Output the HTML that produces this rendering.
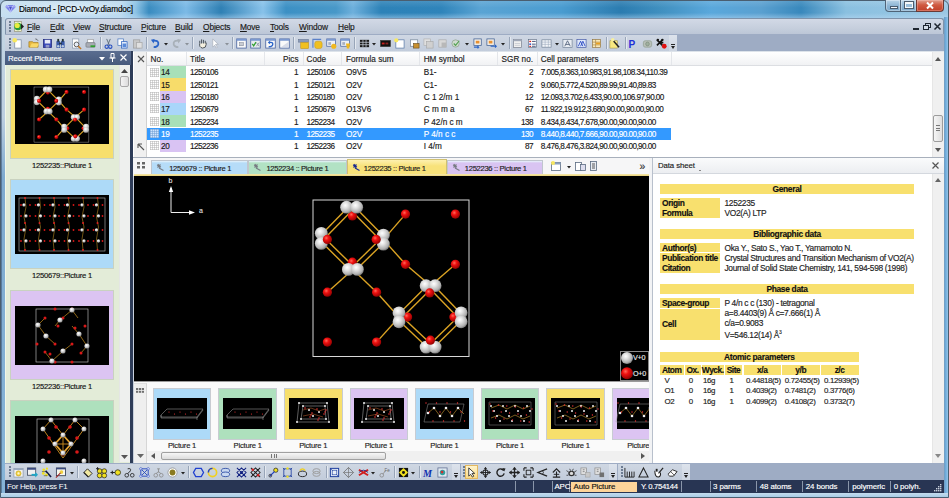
<!DOCTYPE html>
<html><head><meta charset="utf-8">
<style>
*{margin:0;padding:0;box-sizing:border-box}
html,body{width:949px;height:498px;overflow:hidden;background:#a9c4dc;font-family:"Liberation Sans",sans-serif;font-size:8px;color:#000}
.a{position:absolute}
.t{position:absolute;white-space:nowrap;line-height:1;-webkit-text-stroke:0.15px currentColor}
svg{position:absolute;overflow:visible}
</style></head><body>

<div class="a" style="left:0px;top:0px;width:949px;height:498px;background:linear-gradient(90deg,#c8e0f0 0px,#bcdaee 120px,#8cc2e4 135px,#3a8cc0 148px,#7cbae6 185px,#2f80b4 220px,#88c2ea 262px,#3c90c4 285px,#4898c8 335px,#6eb0dc 352px,#2d82b8 380px,#2f84ba 440px,#5aa4d4 480px,#4a9cd0 560px,#2b7cb0 620px,#4090c0 660px,#5aa8dc 710px,#5aa0d0 760px,#3888bc 800px,#8ac0e0 845px,#9cc8e4 949px);border-radius:6px 6px 0 0;border:1px solid #4a5e70"></div>
<div class="a" style="left:1px;top:1px;width:947px;height:17px;background:linear-gradient(rgba(255,255,255,.12),rgba(255,255,255,0) 40%,rgba(255,255,255,0) 70%,rgba(190,220,245,.45));border-radius:5px 5px 0 0"></div>
<div class="a" style="left:10px;top:1px;width:125px;height:16px;background:radial-gradient(ellipse at center,rgba(235,245,252,.7),rgba(235,245,252,0) 75%)"></div>
<div class="a" style="left:1px;top:493px;width:947px;height:4px;background:linear-gradient(#c4dcee,#a8cce6)"></div>
<div class="a" style="left:1px;top:17px;width:4px;height:476px;background:linear-gradient(#c4d6e4 0px,#bccfe0 100px,#7eaad0 160px,#86b4d8 476px)"></div>
<div class="a" style="left:1px;top:17px;width:1px;height:476px;background:rgba(40,60,90,.45)"></div>
<div class="a" style="left:944px;top:17px;width:4px;height:476px;background:linear-gradient(90deg,#7a9ab8,#6aa8d8 30%,#94c4e8)"></div>
<svg style="left:5px;top:5px" width="11" height="8" viewBox="0 0 11 8"><path d="M0 1.8L2 0H9L11 1.8L5.5 7.5Z" fill="#7a82ea"/><path d="M0 1.8H11M2 0L4 1.8L5.5 7.5M9 0L7 1.8L5.5 7.5" stroke="#c8d0fa" stroke-width="0.7" fill="none"/><path d="M4 1.8L5.5 5L7 1.8Z" fill="#4a50c8"/></svg>
<div class="t" style="left:19px;top:5.6px;font-size:8.2px;color:#000;letter-spacing:-0.12px">Diamond - [PCD-VxOy.diamdoc]</div>
<div class="a" style="left:885px;top:0px;width:16px;height:12px;background:linear-gradient(#b8d4e8,#8fb6d4 50%,#7aa8cc);border:1px solid #4f6478;border-top:none;border-radius:0 0 0 4px;box-shadow:inset 0 0 0 1px rgba(255,255,255,.35)"></div>
<div class="a" style="left:889.5px;top:6px;width:8px;height:3px;background:#f4f8fb;border:1px solid #4a5c6e"></div>
<div class="a" style="left:900px;top:0px;width:17px;height:12px;background:linear-gradient(#b8d4e8,#8fb6d4 50%,#7aa8cc);border:1px solid #4f6478;border-top:none;box-shadow:inset 0 0 0 1px rgba(255,255,255,.35)"></div>
<div class="a" style="left:904.5px;top:2px;width:8px;height:6px;background:#9cc0dc;border:1px solid #f4f8fb;outline:1px solid #4a5c6e;border-top-width:2px"></div>
<div class="a" style="left:916px;top:0px;width:28px;height:12px;background:linear-gradient(#e0a090,#d05a42 45%,#c0402a);border:1px solid #6a3a35;border-top:none;border-radius:0 0 4px 0;box-shadow:inset 0 0 0 1px rgba(255,200,190,.35)"></div>
<svg style="left:926px;top:2px" width="8" height="7" viewBox="0 0 8 7"><path d="M1 0.5L7 6.5M7 0.5L1 6.5" stroke="#fff" stroke-width="2"/></svg>
<div class="a" style="left:5px;top:18px;width:939px;height:16px;background:linear-gradient(#d2d9e6,#c6cfdd 60%,#bcc6d7);border:1px solid #7f93ab;border-bottom:none;border-radius:3px 3px 0 0"></div>
<div class="a" style="left:9px;top:21px;width:2px;height:2px;background:#6d7c92"></div>
<div class="a" style="left:9px;top:24px;width:2px;height:2px;background:#6d7c92"></div>
<div class="a" style="left:9px;top:27px;width:2px;height:2px;background:#6d7c92"></div>
<div class="a" style="left:9px;top:30px;width:2px;height:2px;background:#6d7c92"></div>
<svg style="left:12.5px;top:20.5px" width="11" height="11" viewBox="0 0 11 11"><rect x="1.5" y="0.5" width="7" height="10" fill="#f0f0d0" stroke="#8a8a6a" stroke-width="0.6"/><circle cx="5" cy="5.5" r="3.8" fill="#2a9a3a"/><circle cx="4.2" cy="4.5" r="2.6" fill="#e8ec40"/><path d="M8 2.5L11 5.5L8 8.5Z" fill="#222"/></svg>
<div class="t" style="left:27px;top:22.5px;font-size:8.4px;color:#1a1a1a;letter-spacing:-0.15px"><u>F</u>ile</div>
<div class="t" style="left:50px;top:22.5px;font-size:8.4px;color:#1a1a1a;letter-spacing:-0.15px"><u>E</u>dit</div>
<div class="t" style="left:73px;top:22.5px;font-size:8.4px;color:#1a1a1a;letter-spacing:-0.15px"><u>V</u>iew</div>
<div class="t" style="left:99px;top:22.5px;font-size:8.4px;color:#1a1a1a;letter-spacing:-0.15px"><u>S</u>tructure</div>
<div class="t" style="left:141px;top:22.5px;font-size:8.4px;color:#1a1a1a;letter-spacing:-0.15px"><u>P</u>icture</div>
<div class="t" style="left:175px;top:22.5px;font-size:8.4px;color:#1a1a1a;letter-spacing:-0.15px"><u>B</u>uild</div>
<div class="t" style="left:203px;top:22.5px;font-size:8.4px;color:#1a1a1a;letter-spacing:-0.15px"><u>O</u>bjects</div>
<div class="t" style="left:240px;top:22.5px;font-size:8.4px;color:#1a1a1a;letter-spacing:-0.15px"><u>M</u>ove</div>
<div class="t" style="left:270px;top:22.5px;font-size:8.4px;color:#1a1a1a;letter-spacing:-0.15px"><u>T</u>ools</div>
<div class="t" style="left:299px;top:22.5px;font-size:8.4px;color:#1a1a1a;letter-spacing:-0.15px"><u>W</u>indow</div>
<div class="t" style="left:338px;top:22.5px;font-size:8.4px;color:#1a1a1a;letter-spacing:-0.15px"><u>H</u>elp</div>
<div class="a" style="left:912.5px;top:28px;width:6px;height:2px;background:#1f2630"></div>
<svg style="left:922.5px;top:23px" width="8" height="7" viewBox="0 0 8 7"><rect x="2.5" y="0.5" width="5" height="4" fill="none" stroke="#1f2630" stroke-width="1"/><rect x="0.5" y="2.5" width="5" height="4" fill="#d5dde8" stroke="#1f2630" stroke-width="1"/></svg>
<svg style="left:933.5px;top:23px" width="7" height="7" viewBox="0 0 7 7"><path d="M0.5 0.5L6.5 6.5M6.5 0.5L0.5 6.5" stroke="#1f2630" stroke-width="1.5"/></svg>
<div class="a" style="left:5px;top:34px;width:939px;height:17px;background:#9eacc4"></div>
<div class="a" style="left:5px;top:35px;width:672px;height:16px;background:linear-gradient(#cfd7e3,#c2ccdb);border-radius:0 2px 2px 0"></div>
<div class="a" style="left:669px;top:35px;width:8px;height:16px;background:linear-gradient(#dde3ec,#cdd5e1)"></div>
<svg style="left:670px;top:44px" width="6" height="6" viewBox="0 0 6 6"><rect x="1" y="0" width="4" height="1" fill="#222"/><path d="M1 2L5 2L3 5Z" fill="#222"/></svg>
<div class="a" style="left:9px;top:38px;width:2px;height:2px;background:#6d7c92"></div>
<div class="a" style="left:9px;top:41px;width:2px;height:2px;background:#6d7c92"></div>
<div class="a" style="left:9px;top:44px;width:2px;height:2px;background:#6d7c92"></div>
<div class="a" style="left:9px;top:47px;width:2px;height:2px;background:#6d7c92"></div>
<svg style="left:12.2px;top:37.5px" width="11" height="11" viewBox="0 0 12 12"><rect x="3" y="2" width="7" height="9" fill="#fff" stroke="#7a8aa0" stroke-width="0.8"/><circle cx="3" cy="2.5" r="2.5" fill="#f8e860"/></svg>
<svg style="left:27.5px;top:37.5px" width="11" height="11" viewBox="0 0 12 12"><path d="M1 4L5 4L6 5L11 5L11 10L1 10Z" fill="#e8b840" stroke="#a07818" stroke-width="0.7"/><path d="M2 10L4 6L12 6L10 10Z" fill="#f8d868"/><path d="M8 1 Q10 1 11 3" stroke="#444" stroke-width="0.8" fill="none"/></svg>
<svg style="left:41.8px;top:37.5px" width="11" height="11" viewBox="0 0 12 12"><rect x="1.5" y="1.5" width="9" height="9" fill="#3848b8" stroke="#20287a" stroke-width="0.8"/><rect x="3" y="2" width="6" height="4" fill="#e8ecf8"/><rect x="4" y="7.5" width="4" height="3" fill="#9098c8"/></svg>
<svg style="left:55.3px;top:37.5px" width="11" height="11" viewBox="0 0 12 12"><rect x="1.5" y="3" width="4" height="8" rx="1" fill="#3a5aa8"/><rect x="6.5" y="3" width="4" height="8" rx="1" fill="#3a5aa8"/><rect x="2.5" y="1" width="2" height="3" fill="#233"/><rect x="7.5" y="1" width="2" height="3" fill="#233"/><rect x="4.5" y="5" width="3" height="2" fill="#234"/><circle cx="3.5" cy="9" r="1.3" fill="#bcd"/><circle cx="8.5" cy="9" r="1.3" fill="#bcd"/></svg>
<svg style="left:70.5px;top:37.5px" width="11" height="11" viewBox="0 0 12 12"><rect x="1.5" y="1" width="7" height="10" fill="#fff" stroke="#8a9ab0" stroke-width="0.8"/><circle cx="6" cy="7" r="2.6" fill="#e8eef8" stroke="#555" stroke-width="1"/><path d="M8 9L11 12" stroke="#c87820" stroke-width="1.6"/></svg>
<svg style="left:84.5px;top:37.5px" width="11" height="11" viewBox="0 0 12 12"><rect x="3" y="1.5" width="6" height="4" fill="#fff" stroke="#888" stroke-width="0.6"/><rect x="1" y="5" width="10" height="5" rx="1" fill="#a8acb4" stroke="#6a6e78" stroke-width="0.6"/><rect x="6" y="8" width="5" height="2" fill="#30a030"/></svg>
<div class="a" style="left:100.0px;top:37px;width:1px;height:12px;background:#98a5b8;box-shadow:1px 0 0 #e4e9f0"></div>
<svg style="left:102.5px;top:37.5px" width="11" height="11" viewBox="0 0 12 12"><path d="M4 1L7 8M8 1L5 8" stroke="#5a6a7a" stroke-width="1"/><circle cx="4" cy="9.5" r="1.8" fill="none" stroke="#2850c0" stroke-width="1.2"/><circle cx="8" cy="9.5" r="1.8" fill="none" stroke="#2850c0" stroke-width="1.2"/></svg>
<svg style="left:117.3px;top:37.5px" width="11" height="11" viewBox="0 0 12 12"><rect x="1" y="1" width="6" height="7" fill="#fff" stroke="#4a78c0" stroke-width="0.8"/><rect x="5" y="4" width="6" height="7" fill="#e8f0fc" stroke="#2860c0" stroke-width="0.8"/><rect x="6" y="6" width="4" height="4" fill="#5a8ad8"/></svg>
<svg style="left:132.0px;top:37.5px" width="11" height="11" viewBox="0 0 12 12"><rect x="1.5" y="2" width="7" height="9" fill="#c8c8c8" stroke="#a0a0a0" stroke-width="0.8"/><rect x="5" y="5" width="6" height="6" fill="#e0e0e0" stroke="#a8a8a8" stroke-width="0.8"/></svg>
<div class="a" style="left:146.0px;top:37px;width:1px;height:12px;background:#98a5b8;box-shadow:1px 0 0 #e4e9f0"></div>
<svg style="left:150.2px;top:37.5px" width="11" height="11" viewBox="0 0 12 12"><path d="M3 3 Q10 2 9 7 Q8 10 4 10" stroke="#2a64c8" stroke-width="2" fill="none"/><path d="M1 2L5 1L4 6Z" fill="#2a64c8"/></svg>
<svg style="left:163.8px;top:43.0px" width="4" height="3" viewBox="0 0 4 3"><path d="M0 0H4L2 2.5Z" fill="#222"/></svg>
<svg style="left:170.5px;top:37.5px" width="11" height="11" viewBox="0 0 12 12"><path d="M9 3 Q2 2 3 7 Q4 10 8 10" stroke="#a8b0b8" stroke-width="2" fill="none"/><path d="M11 2L7 1L8 6Z" fill="#a8b0b8"/></svg>
<svg style="left:184.8px;top:43.0px" width="4" height="3" viewBox="0 0 4 3"><path d="M0 0H4L2 2.5Z" fill="#8a9098"/></svg>
<div class="a" style="left:192.0px;top:37px;width:1px;height:12px;background:#98a5b8;box-shadow:1px 0 0 #e4e9f0"></div>
<svg style="left:197.0px;top:37.5px" width="11" height="11" viewBox="0 0 12 12"><path d="M3 6 L3 3 M5 6L5 1.5 M7 6L7 2 M9 6L9 3 M3 6 Q2 10 6 11 Q10 11 10 7 L10 5" stroke="#404850" stroke-width="1" fill="#f4f0e0"/></svg>
<svg style="left:209.5px;top:37.5px" width="11" height="11" viewBox="0 0 12 12"><path d="M3 1L3 10L5 8L7 11L8 10L6 7L9 7Z" fill="#fff" stroke="#a8b0bc" stroke-width="0.8"/></svg>
<svg style="left:224.6px;top:43.0px" width="4" height="3" viewBox="0 0 4 3"><path d="M0 0H4L2 2.5Z" fill="#8a9098"/></svg>
<div class="a" style="left:231.6px;top:37px;width:1px;height:12px;background:#98a5b8;box-shadow:1px 0 0 #e4e9f0"></div>
<svg style="left:235.9px;top:37.5px" width="11" height="11" viewBox="0 0 12 12"><rect x="0.8" y="1" width="10.4" height="10" fill="#fafafa" stroke="#4a64a0" stroke-width="0.9"/><rect x="0.8" y="1" width="10.4" height="2" fill="#7a98d0"/><rect x="4" y="5" width="4" height="3.5" fill="#c8ccd4" stroke="#707888" stroke-width="0.5"/></svg>
<svg style="left:249.8px;top:37.5px" width="11" height="11" viewBox="0 0 12 12"><rect x="0.8" y="1" width="10.4" height="10" fill="#e8ecf0" stroke="#4a64a0" stroke-width="0.9"/><rect x="0.8" y="1" width="10.4" height="2" fill="#7a98d0"/><path d="M2.5 6.5L4 8.5L6.5 4.5" stroke="#30a030" stroke-width="1.4" fill="none"/><path d="M7 5L10 9M10 5L7 9" stroke="#8a90a0" stroke-width="0.9"/></svg>
<svg style="left:265.0px;top:37.5px" width="11" height="11" viewBox="0 0 12 12"><rect x="0.8" y="1" width="10.4" height="10" fill="#fafafa" stroke="#4a64a0" stroke-width="0.9"/><rect x="0.8" y="1" width="10.4" height="2" fill="#7a98d0"/><path d="M4 9.5Q8.5 9.5 8.5 6.5Q8.5 4.5 5 4.8" stroke="#2a64c8" stroke-width="1.5" fill="none"/><path d="M3 4.8L5.5 3V6.8Z" fill="#2a64c8"/></svg>
<svg style="left:278.9px;top:37.5px" width="11" height="11" viewBox="0 0 12 12"><rect x="0.8" y="1" width="10.4" height="10" fill="#fafafa" stroke="#4a64a0" stroke-width="0.9"/><rect x="0.8" y="1" width="10.4" height="2" fill="#7a98d0"/><path d="M2 10L10.5 4V10Z" fill="#d8dce8"/></svg>
<div class="a" style="left:293.0px;top:37px;width:1px;height:12px;background:#98a5b8;box-shadow:1px 0 0 #e4e9f0"></div>
<svg style="left:297.9px;top:37.5px" width="11" height="11" viewBox="0 0 12 12"><rect x="0.5" y="1.5" width="11" height="3" fill="#8a9ab8" stroke="#5a6a88" stroke-width="0.5"/><rect x="3" y="5" width="8.5" height="6.5" fill="#f0c020" stroke="#c09010" stroke-width="0.6"/></svg>
<svg style="left:311.8px;top:37.5px" width="11" height="11" viewBox="0 0 12 12"><path d="M1 10.5V1.5H10" stroke="#5a80c8" stroke-width="1.2" fill="none"/><rect x="3" y="3.5" width="8" height="8" rx="2.5" fill="#f0c020" stroke="#c89818" stroke-width="0.6"/></svg>
<svg style="left:325.8px;top:37.5px" width="11" height="11" viewBox="0 0 12 12"><rect x="0.8" y="1" width="9.5" height="8" fill="#eef0f4" stroke="#4a64a0" stroke-width="0.8"/><rect x="0.8" y="1" width="9.5" height="2" fill="#7a98d0"/><rect x="2.5" y="4.5" width="3" height="3" fill="#a8b0c0"/><circle cx="8.5" cy="9" r="2.8" fill="#f0b820"/></svg>
<svg style="left:339.7px;top:37.5px" width="11" height="11" viewBox="0 0 12 12"><rect x="0.8" y="1" width="9.5" height="8" fill="#eef0f4" stroke="#4a64a0" stroke-width="0.8"/><rect x="0.8" y="1" width="9.5" height="2" fill="#7a98d0"/><rect x="2.5" y="4.5" width="3" height="3" fill="#a8b0c0"/><path d="M6.5 6H11L10 11.5H7.5Z" fill="#f0b820"/></svg>
<div class="a" style="left:354.0px;top:37px;width:1px;height:12px;background:#98a5b8;box-shadow:1px 0 0 #e4e9f0"></div>
<svg style="left:358.7px;top:37.5px" width="11" height="11" viewBox="0 0 12 12"><rect x="1" y="2" width="10" height="8" fill="#1a1a1a"/><path d="M1 4.7H11M1 7.3H11M4.3 2V10M7.7 2V10" stroke="#c8d0dc" stroke-width="0.8"/></svg>
<svg style="left:372.3px;top:43.0px" width="4" height="3" viewBox="0 0 4 3"><path d="M0 0H4L2 2.5Z" fill="#222"/></svg>
<svg style="left:380.2px;top:37.5px" width="11" height="11" viewBox="0 0 12 12"><rect x="0.5" y="2.5" width="11" height="7" fill="#101010" stroke="#404040" stroke-width="0.6"/><rect x="2" y="5" width="3" height="2" fill="#c82020"/><rect x="6" y="5" width="3" height="2" fill="#882020"/></svg>
<svg style="left:394.1px;top:37.5px" width="11" height="11" viewBox="0 0 12 12"><rect x="2" y="2" width="9" height="9" fill="#fff" stroke="#5a7aa8" stroke-width="0.8"/><circle cx="2.5" cy="2.5" r="2.3" fill="#f8e860"/></svg>
<svg style="left:409.3px;top:37.5px" width="11" height="11" viewBox="0 0 12 12"><rect x="1.5" y="2" width="8" height="7" fill="#fff" stroke="#6a7a90" stroke-width="0.7"/><rect x="5" y="6" width="6" height="5" fill="#c89030" stroke="#604010" stroke-width="0.6"/></svg>
<svg style="left:423.2px;top:37.5px" width="11" height="11" viewBox="0 0 12 12"><rect x="1" y="1" width="7" height="7" fill="#e0e0e0" stroke="#b0b0b0" stroke-width="0.7"/><rect x="4" y="4" width="7" height="7" fill="#d0d0d0" stroke="#a8a8a8" stroke-width="0.7"/></svg>
<svg style="left:437.2px;top:37.5px" width="11" height="11" viewBox="0 0 12 12"><rect x="2" y="2" width="8" height="8" fill="#d8d8d8" stroke="#a8a8a8" stroke-width="0.7"/><rect x="5" y="5" width="5" height="5" fill="#b8b8b8"/></svg>
<svg style="left:451.1px;top:37.5px" width="11" height="11" viewBox="0 0 12 12"><circle cx="5" cy="6" r="4" fill="#d0dcd0" stroke="#90a090" stroke-width="0.8"/><path d="M3 6L5 8L9 3" stroke="#50a050" stroke-width="1.2" fill="none"/></svg>
<svg style="left:464.7px;top:43.0px" width="4" height="3" viewBox="0 0 4 3"><path d="M0 0H4L2 2.5Z" fill="#222"/></svg>
<svg style="left:472.7px;top:37.5px" width="11" height="11" viewBox="0 0 12 12"><rect x="1" y="1" width="8" height="7" fill="#f4f0e8" stroke="#3a5a90" stroke-width="0.8"/><rect x="3" y="3" width="4" height="3" fill="#e89030"/><path d="M1 10L6 10L5 8.5M6 10L5 11.5" stroke="#2a64c8" stroke-width="1.2" fill="none"/></svg>
<svg style="left:486.1px;top:37.5px" width="11" height="11" viewBox="0 0 12 12"><rect x="1" y="1" width="8" height="7" fill="#f4f0e8" stroke="#3a5a90" stroke-width="0.8"/><rect x="3" y="3" width="4" height="3" fill="#e89030"/><path d="M5 9L11 9L10 7.5M11 9L10 10.5" stroke="#2a64c8" stroke-width="1.2" fill="none"/></svg>
<svg style="left:501.0px;top:43.0px" width="4" height="3" viewBox="0 0 4 3"><path d="M0 0H4L2 2.5Z" fill="#222"/></svg>
<div class="a" style="left:509.0px;top:37px;width:1px;height:12px;background:#98a5b8;box-shadow:1px 0 0 #e4e9f0"></div>
<svg style="left:512.2px;top:37.5px" width="11" height="11" viewBox="0 0 12 12"><rect x="1.5" y="1.5" width="9" height="9" fill="#f0f0f0" stroke="#7a8090" stroke-width="0.8"/><rect x="1.5" y="1.5" width="9" height="2" fill="#a0a8b8"/><path d="M3 6H9M3 8H9" stroke="#c0c4cc" stroke-width="0.8"/></svg>
<svg style="left:526.5px;top:37.5px" width="11" height="11" viewBox="0 0 12 12"><rect x="1.5" y="1.5" width="9" height="9" fill="#fff" stroke="#5a6a80" stroke-width="0.7"/><rect x="2.5" y="3" width="2" height="1.5" fill="#d02020"/><rect x="2.5" y="6" width="2" height="1.5" fill="#2040c0"/><rect x="2.5" y="8.5" width="2" height="1.2" fill="#d02020"/><path d="M5.5 3.7H9.5M5.5 6.7H9.5M5.5 9H9.5" stroke="#203060" stroke-width="0.9"/></svg>
<svg style="left:540.5px;top:37.5px" width="11" height="11" viewBox="0 0 12 12"><rect x="1" y="2" width="10" height="8" fill="#f4f6fa" stroke="#6a7a90" stroke-width="0.7"/><path d="M1 4.5H11M1 7H11M4.5 2V10M8 2V10" stroke="#9aa8bc" stroke-width="0.6"/></svg>
<svg style="left:554.7px;top:43.0px" width="4" height="3" viewBox="0 0 4 3"><path d="M0 0H4L2 2.5Z" fill="#222"/></svg>
<svg style="left:562.1px;top:37.5px" width="11" height="11" viewBox="0 0 12 12"><rect x="1" y="1.5" width="10" height="9" fill="#e8ecf2" stroke="#6a7a90" stroke-width="0.7"/><path d="M3 9L6 3L9 9M4 7H8" stroke="#50607a" stroke-width="0.9" fill="none"/></svg>
<svg style="left:576.0px;top:37.5px" width="11" height="11" viewBox="0 0 12 12"><rect x="1" y="1.5" width="10" height="9" fill="#dfe8fa" stroke="#3a50a0" stroke-width="0.7"/><path d="M2.5 9L5 3.5L7.5 9M5 9L7.5 3.5L10 9" stroke="#2040c0" stroke-width="0.9" fill="none"/></svg>
<svg style="left:591.2px;top:37.5px" width="11" height="11" viewBox="0 0 12 12"><rect x="1.5" y="1.5" width="9" height="9" fill="#f8e8b8" stroke="#8a7040" stroke-width="0.7"/><path d="M1.5 4.5H10.5M1.5 7.5H10.5M5 1.5V10.5" stroke="#a88040" stroke-width="0.7"/><rect x="5.5" y="5" width="4.5" height="2" fill="#e8a020"/></svg>
<div class="a" style="left:606.0px;top:37px;width:1px;height:12px;background:#98a5b8;box-shadow:1px 0 0 #e4e9f0"></div>
<svg style="left:608.9px;top:37.5px" width="11" height="11" viewBox="0 0 12 12"><rect x="1" y="3" width="8" height="8" fill="#f8e880" stroke="#a09040" stroke-width="0.6"/><path d="M3 1L11 10" stroke="#222" stroke-width="1.6"/><circle cx="4" cy="2" r="2" fill="#f8f0a0"/></svg>
<div class="a" style="left:624.6px;top:37px;width:1px;height:12px;background:#98a5b8;box-shadow:1px 0 0 #e4e9f0"></div>
<svg style="left:626.7px;top:37.5px" width="11" height="11" viewBox="0 0 12 12"><text x="1.5" y="10.5" font-family="Liberation Sans" font-weight="bold" font-size="11" fill="#2030d8">P</text></svg>
<svg style="left:641.8px;top:37.5px" width="11" height="11" viewBox="0 0 12 12"><rect x="1.5" y="3" width="9" height="7" rx="2" fill="#b8c0b8" stroke="#8a9a8a" stroke-width="0.7"/><circle cx="6" cy="6.5" r="2" fill="#a0b0a0" stroke="#708070" stroke-width="0.6"/></svg>
<svg style="left:655.8px;top:37.5px" width="11" height="11" viewBox="0 0 12 12"><path d="M1 2L7 8M7 2L1 8M2 5H8" stroke="#111" stroke-width="1.8"/><circle cx="2" cy="2" r="1.3" fill="#111"/><circle cx="7" cy="2" r="1.3" fill="#111"/><circle cx="9" cy="9" r="2.6" fill="#e01010"/></svg>
<div class="a" style="left:5px;top:51px;width:939px;height:412px;background:#c8d0dc"></div>
<div class="a" style="left:5px;top:51px;width:128px;height:412px;background:#2e3c58"></div>
<div class="a" style="left:5px;top:51px;width:126px;height:14px;background:linear-gradient(#5a6d90,#475a7c)"></div>
<div class="t" style="left:8px;top:55px;font-size:7.8px;color:#fff;letter-spacing:-0.1px">Recent Pictures</div>
<svg style="left:99px;top:57px" width="6" height="4" viewBox="0 0 6 4"><path d="M0 0H6L3 3.5Z" fill="#fff"/></svg>
<svg style="left:109px;top:53px" width="7" height="9" viewBox="0 0 7 9"><path d="M2 0.5H5V5H2ZM0.5 5H6.5M3.5 5V9" stroke="#fff" stroke-width="1" fill="none"/></svg>
<svg style="left:120px;top:54px" width="7" height="7" viewBox="0 0 7 7"><path d="M0.5 0.5L6.5 6.5M6.5 0.5L0.5 6.5" stroke="#fff" stroke-width="1.2"/></svg>
<div class="a" style="left:5px;top:65px;width:125px;height:398px;background:#e3ecd8;border-left:1px solid #f0f6ea"></div>
<div class="a" style="left:119px;top:65px;width:11px;height:397px;background:#eef0ee;border-left:1px solid #e4e6e4"></div>
<svg style="left:121px;top:69px" width="7" height="4" viewBox="0 0 7 4"><path d="M0 4H7L3.5 0Z" fill="#444"/></svg>
<div class="a" style="left:120px;top:76px;width:9px;height:11px;background:linear-gradient(90deg,#f4f4f4,#dcdcdc);border:1px solid #a8a8a8;border-radius:2px"></div>
<svg style="left:121px;top:455px" width="7" height="4" viewBox="0 0 7 4"><path d="M0 0H7L3.5 4Z" fill="#555"/></svg>
<svg width="0" height="0" style="position:absolute"><defs>
<radialGradient id="gO" cx="0.38" cy="0.35" r="0.7"><stop offset="0" stop-color="#ff6a5a"/><stop offset="0.35" stop-color="#f01010"/><stop offset="1" stop-color="#8a0000"/></radialGradient>
<radialGradient id="gV" cx="0.4" cy="0.35" r="0.7"><stop offset="0" stop-color="#ffffff"/><stop offset="0.3" stop-color="#e4e4e4"/><stop offset="0.75" stop-color="#b0b0b0"/><stop offset="1" stop-color="#6a6a6a"/></radialGradient>
</defs></svg>
<div class="a" style="left:10px;top:69px;width:104px;height:90px;background:#f7df6c;border:1px solid #c9d2c0"></div>
<div class="t" style="left:12px;top:162px;font-size:7.6px;color:#111;width:100px;text-align:center;letter-spacing:-0.2px">1252235::Picture 1</div>
<div class="a" style="left:10px;top:179px;width:104px;height:90px;background:#addaf8;border:1px solid #c9d2c0"></div>
<div class="t" style="left:12px;top:272px;font-size:7.6px;color:#111;width:100px;text-align:center;letter-spacing:-0.2px">1250679::Picture 1</div>
<div class="a" style="left:10px;top:289.5px;width:104px;height:90px;background:#dcc4f2;border:1px solid #c9d2c0"></div>
<div class="t" style="left:12px;top:382.5px;font-size:7.6px;color:#111;width:100px;text-align:center;letter-spacing:-0.2px">1252236::Picture 1</div>
<div class="a" style="left:10px;top:400px;width:104px;height:90px;background:#aee0bd;border:1px solid #c9d2c0"></div>
<div class="a" style="left:15px;top:84.5px;width:94px;height:59px;background:#000"></div>
<svg style="left:34px;top:87px" width="54.9" height="55.3" viewBox="0 0 156 157"><rect x="0" y="0" width="156" height="156.5" fill="none" stroke="#d8d8d8" stroke-width="1"/><line x1="38.6" y1="7.2" x2="8.3" y2="38.3" stroke="#dca424" stroke-width="3.2"/><line x1="38.6" y1="7.2" x2="70.4" y2="39.6" stroke="#dca424" stroke-width="3.2"/><line x1="8.3" y1="38.3" x2="39.9" y2="69.4" stroke="#dca424" stroke-width="3.2"/><line x1="70.4" y1="39.6" x2="39.9" y2="69.4" stroke="#dca424" stroke-width="3.2"/><line x1="117.6" y1="85.7" x2="86.0" y2="117.3" stroke="#dca424" stroke-width="3.2"/><line x1="117.6" y1="85.7" x2="148.1" y2="117.3" stroke="#dca424" stroke-width="3.2"/><line x1="86.0" y1="117.3" x2="117.6" y2="147.1" stroke="#dca424" stroke-width="3.2"/><line x1="148.1" y1="117.3" x2="117.6" y2="147.1" stroke="#dca424" stroke-width="3.2"/><line x1="70.4" y1="39.6" x2="92.5" y2="64.3" stroke="#dca424" stroke-width="3.2"/><line x1="92.5" y1="64.3" x2="117.6" y2="85.7" stroke="#dca424" stroke-width="3.2"/><line x1="39.9" y1="69.4" x2="63.6" y2="92.2" stroke="#dca424" stroke-width="3.2"/><line x1="63.6" y1="92.2" x2="86.0" y2="117.3" stroke="#dca424" stroke-width="3.2"/><line x1="70.4" y1="39.6" x2="92.5" y2="14.1" stroke="#dca424" stroke-width="3.2"/><line x1="117.6" y1="85.7" x2="142.4" y2="64.3" stroke="#dca424" stroke-width="3.2"/><line x1="39.9" y1="69.4" x2="14.4" y2="92.2" stroke="#dca424" stroke-width="3.2"/><line x1="86.0" y1="117.3" x2="63.6" y2="142.1" stroke="#dca424" stroke-width="3.2"/><circle cx="92.5" cy="14.1" r="5.8" fill="url(#gO)"/><circle cx="142.4" cy="14.1" r="5.8" fill="url(#gO)"/><circle cx="39.4" cy="15.9" r="5.8" fill="url(#gO)"/><circle cx="92.5" cy="64.3" r="5.8" fill="url(#gO)"/><circle cx="142.4" cy="64.3" r="5.8" fill="url(#gO)"/><circle cx="39.4" cy="62.2" r="5.8" fill="url(#gO)"/><circle cx="14.4" cy="92.2" r="5.8" fill="url(#gO)"/><circle cx="63.6" cy="92.2" r="5.8" fill="url(#gO)"/><circle cx="94.6" cy="117.1" r="5.8" fill="url(#gO)"/><circle cx="140.9" cy="117.1" r="5.8" fill="url(#gO)"/><circle cx="14.4" cy="142.1" r="5.8" fill="url(#gO)"/><circle cx="63.6" cy="142.1" r="5.8" fill="url(#gO)"/><circle cx="33.6" cy="7.2" r="8.5" fill="url(#gV)"/><circle cx="43.7" cy="7.2" r="8.5" fill="url(#gV)"/><circle cx="8.3" cy="33.3" r="8.5" fill="url(#gV)"/><circle cx="8.3" cy="43.4" r="8.5" fill="url(#gV)"/><circle cx="70.4" cy="35.1" r="8.5" fill="url(#gV)"/><circle cx="70.4" cy="44.1" r="8.5" fill="url(#gV)"/><circle cx="35.4" cy="69.4" r="8.5" fill="url(#gV)"/><circle cx="44.4" cy="69.4" r="8.5" fill="url(#gV)"/><circle cx="113.1" cy="85.7" r="8.5" fill="url(#gV)"/><circle cx="122.1" cy="85.7" r="8.5" fill="url(#gV)"/><circle cx="86" cy="112.8" r="8.5" fill="url(#gV)"/><circle cx="86" cy="121.8" r="8.5" fill="url(#gV)"/><circle cx="148.1" cy="112.8" r="8.5" fill="url(#gV)"/><circle cx="148.1" cy="121.8" r="8.5" fill="url(#gV)"/><circle cx="113.1" cy="147.1" r="8.5" fill="url(#gV)"/><circle cx="122.1" cy="147.1" r="8.5" fill="url(#gV)"/><circle cx="14.4" cy="39.4" r="5.8" fill="url(#gO)"/><circle cx="116.7" cy="92.9" r="5.8" fill="url(#gO)"/><circle cx="117.4" cy="140.2" r="5.8" fill="url(#gO)"/><circle cx="63.2" cy="39.4" r="5.8" fill="url(#gO)"/></svg>
<div class="a" style="left:15px;top:195px;width:94px;height:59px;background:#000"></div>
<svg style="left:15px;top:195px" width="94" height="59" viewBox="0 0 94 59"><rect x="4" y="3" width="86" height="53" fill="none" stroke="#bbb" stroke-width="0.6"/><path d="M10.0 3 L11.0 12 L9.0 22 L11.0 32 L9.0 44 L10.0 55" stroke="#b88a20" stroke-width="0.6" fill="none"/><circle cx="15.0" cy="10" r="0.9" fill="#d81818"/><circle cx="6.0" cy="10" r="0.9" fill="#d81818"/><circle cx="9.0" cy="10" r="1.7" fill="url(#gV)"/><circle cx="15.0" cy="21" r="0.9" fill="#d81818"/><circle cx="6.0" cy="21" r="0.9" fill="#d81818"/><circle cx="11.0" cy="21" r="1.7" fill="url(#gV)"/><circle cx="15.0" cy="35" r="0.9" fill="#d81818"/><circle cx="6.0" cy="35" r="0.9" fill="#d81818"/><circle cx="9.0" cy="35" r="1.7" fill="url(#gV)"/><circle cx="15.0" cy="46" r="0.9" fill="#d81818"/><circle cx="6.0" cy="46" r="0.9" fill="#d81818"/><circle cx="11.0" cy="46" r="1.7" fill="url(#gV)"/><circle cx="10.0" cy="3" r="1" fill="#e02020"/><circle cx="10.0" cy="28" r="1" fill="#e02020"/><circle cx="10.0" cy="55" r="1" fill="#e02020"/><path d="M24.5 3 L25.5 12 L23.5 22 L25.5 32 L23.5 44 L24.5 55" stroke="#b88a20" stroke-width="0.6" fill="none"/><circle cx="29.5" cy="10" r="0.9" fill="#d81818"/><circle cx="20.5" cy="10" r="0.9" fill="#d81818"/><circle cx="23.5" cy="10" r="1.7" fill="url(#gV)"/><circle cx="29.5" cy="21" r="0.9" fill="#d81818"/><circle cx="20.5" cy="21" r="0.9" fill="#d81818"/><circle cx="25.5" cy="21" r="1.7" fill="url(#gV)"/><circle cx="29.5" cy="35" r="0.9" fill="#d81818"/><circle cx="20.5" cy="35" r="0.9" fill="#d81818"/><circle cx="23.5" cy="35" r="1.7" fill="url(#gV)"/><circle cx="29.5" cy="46" r="0.9" fill="#d81818"/><circle cx="20.5" cy="46" r="0.9" fill="#d81818"/><circle cx="25.5" cy="46" r="1.7" fill="url(#gV)"/><circle cx="24.5" cy="3" r="1" fill="#e02020"/><circle cx="24.5" cy="28" r="1" fill="#e02020"/><circle cx="24.5" cy="55" r="1" fill="#e02020"/><path d="M39.0 3 L40.0 12 L38.0 22 L40.0 32 L38.0 44 L39.0 55" stroke="#b88a20" stroke-width="0.6" fill="none"/><circle cx="44.0" cy="10" r="0.9" fill="#d81818"/><circle cx="35.0" cy="10" r="0.9" fill="#d81818"/><circle cx="38.0" cy="10" r="1.7" fill="url(#gV)"/><circle cx="44.0" cy="21" r="0.9" fill="#d81818"/><circle cx="35.0" cy="21" r="0.9" fill="#d81818"/><circle cx="40.0" cy="21" r="1.7" fill="url(#gV)"/><circle cx="44.0" cy="35" r="0.9" fill="#d81818"/><circle cx="35.0" cy="35" r="0.9" fill="#d81818"/><circle cx="38.0" cy="35" r="1.7" fill="url(#gV)"/><circle cx="44.0" cy="46" r="0.9" fill="#d81818"/><circle cx="35.0" cy="46" r="0.9" fill="#d81818"/><circle cx="40.0" cy="46" r="1.7" fill="url(#gV)"/><circle cx="39.0" cy="3" r="1" fill="#e02020"/><circle cx="39.0" cy="28" r="1" fill="#e02020"/><circle cx="39.0" cy="55" r="1" fill="#e02020"/><path d="M53.5 3 L54.5 12 L52.5 22 L54.5 32 L52.5 44 L53.5 55" stroke="#b88a20" stroke-width="0.6" fill="none"/><circle cx="58.5" cy="10" r="0.9" fill="#d81818"/><circle cx="49.5" cy="10" r="0.9" fill="#d81818"/><circle cx="52.5" cy="10" r="1.7" fill="url(#gV)"/><circle cx="58.5" cy="21" r="0.9" fill="#d81818"/><circle cx="49.5" cy="21" r="0.9" fill="#d81818"/><circle cx="54.5" cy="21" r="1.7" fill="url(#gV)"/><circle cx="58.5" cy="35" r="0.9" fill="#d81818"/><circle cx="49.5" cy="35" r="0.9" fill="#d81818"/><circle cx="52.5" cy="35" r="1.7" fill="url(#gV)"/><circle cx="58.5" cy="46" r="0.9" fill="#d81818"/><circle cx="49.5" cy="46" r="0.9" fill="#d81818"/><circle cx="54.5" cy="46" r="1.7" fill="url(#gV)"/><circle cx="53.5" cy="3" r="1" fill="#e02020"/><circle cx="53.5" cy="28" r="1" fill="#e02020"/><circle cx="53.5" cy="55" r="1" fill="#e02020"/><path d="M68.0 3 L69.0 12 L67.0 22 L69.0 32 L67.0 44 L68.0 55" stroke="#b88a20" stroke-width="0.6" fill="none"/><circle cx="73.0" cy="10" r="0.9" fill="#d81818"/><circle cx="64.0" cy="10" r="0.9" fill="#d81818"/><circle cx="67.0" cy="10" r="1.7" fill="url(#gV)"/><circle cx="73.0" cy="21" r="0.9" fill="#d81818"/><circle cx="64.0" cy="21" r="0.9" fill="#d81818"/><circle cx="69.0" cy="21" r="1.7" fill="url(#gV)"/><circle cx="73.0" cy="35" r="0.9" fill="#d81818"/><circle cx="64.0" cy="35" r="0.9" fill="#d81818"/><circle cx="67.0" cy="35" r="1.7" fill="url(#gV)"/><circle cx="73.0" cy="46" r="0.9" fill="#d81818"/><circle cx="64.0" cy="46" r="0.9" fill="#d81818"/><circle cx="69.0" cy="46" r="1.7" fill="url(#gV)"/><circle cx="68.0" cy="3" r="1" fill="#e02020"/><circle cx="68.0" cy="28" r="1" fill="#e02020"/><circle cx="68.0" cy="55" r="1" fill="#e02020"/><path d="M82.5 3 L83.5 12 L81.5 22 L83.5 32 L81.5 44 L82.5 55" stroke="#b88a20" stroke-width="0.6" fill="none"/><circle cx="87.5" cy="10" r="0.9" fill="#d81818"/><circle cx="78.5" cy="10" r="0.9" fill="#d81818"/><circle cx="81.5" cy="10" r="1.7" fill="url(#gV)"/><circle cx="87.5" cy="21" r="0.9" fill="#d81818"/><circle cx="78.5" cy="21" r="0.9" fill="#d81818"/><circle cx="83.5" cy="21" r="1.7" fill="url(#gV)"/><circle cx="87.5" cy="35" r="0.9" fill="#d81818"/><circle cx="78.5" cy="35" r="0.9" fill="#d81818"/><circle cx="81.5" cy="35" r="1.7" fill="url(#gV)"/><circle cx="87.5" cy="46" r="0.9" fill="#d81818"/><circle cx="78.5" cy="46" r="0.9" fill="#d81818"/><circle cx="83.5" cy="46" r="1.7" fill="url(#gV)"/><circle cx="82.5" cy="3" r="1" fill="#e02020"/><circle cx="82.5" cy="28" r="1" fill="#e02020"/><circle cx="82.5" cy="55" r="1" fill="#e02020"/></svg>
<div class="a" style="left:15px;top:305.5px;width:94px;height:59px;background:#000"></div>
<svg style="left:15px;top:305.5px" width="94" height="59" viewBox="0 0 94 59"><rect x="21" y="3" width="52" height="53" fill="none" stroke="#ccc" stroke-width="0.6"/><line x1="57" y1="4" x2="45" y2="14" stroke="#c89020" stroke-width="0.7"/><line x1="45" y1="14" x2="40" y2="20" stroke="#c89020" stroke-width="0.7"/><line x1="57" y1="4" x2="63" y2="12" stroke="#c89020" stroke-width="0.7"/><line x1="23" y1="19" x2="30" y2="12" stroke="#c89020" stroke-width="0.7"/><line x1="23" y1="19" x2="31" y2="30" stroke="#c89020" stroke-width="0.7"/><line x1="31" y1="30" x2="40" y2="38" stroke="#c89020" stroke-width="0.7"/><line x1="64" y1="28" x2="57" y2="20" stroke="#c89020" stroke-width="0.7"/><line x1="64" y1="28" x2="72" y2="40" stroke="#c89020" stroke-width="0.7"/><line x1="72" y1="40" x2="66" y2="47" stroke="#c89020" stroke-width="0.7"/><line x1="48" y1="45" x2="57" y2="38" stroke="#c89020" stroke-width="0.7"/><line x1="48" y1="45" x2="37" y2="55" stroke="#c89020" stroke-width="0.7"/><line x1="37" y1="55" x2="30" y2="46" stroke="#c89020" stroke-width="0.7"/><circle cx="40" cy="3" r="1.5" fill="#d81818"/><circle cx="57" cy="3" r="1.5" fill="#d81818"/><circle cx="30" cy="12" r="1.5" fill="#d81818"/><circle cx="48" cy="12" r="1.5" fill="#d81818"/><circle cx="70" cy="20" r="1.5" fill="#d81818"/><circle cx="22" cy="38" r="1.5" fill="#d81818"/><circle cx="40" cy="38" r="1.5" fill="#d81818"/><circle cx="57" cy="38" r="1.5" fill="#d81818"/><circle cx="30" cy="46" r="1.5" fill="#d81818"/><circle cx="66" cy="47" r="1.5" fill="#d81818"/><circle cx="40" cy="56" r="1.5" fill="#d81818"/><circle cx="57" cy="56" r="1.5" fill="#d81818"/><circle cx="43" cy="20" r="1.5" fill="#d81818"/><circle cx="60" cy="22" r="1.5" fill="#d81818"/><circle cx="35" cy="48" r="1.5" fill="#d81818"/><circle cx="57" cy="4" r="2.6" fill="url(#gV)"/><circle cx="45" cy="14" r="2.6" fill="url(#gV)"/><circle cx="23" cy="19" r="2.6" fill="url(#gV)"/><circle cx="31" cy="30" r="2.6" fill="url(#gV)"/><circle cx="64" cy="28" r="2.6" fill="url(#gV)"/><circle cx="72" cy="40" r="2.6" fill="url(#gV)"/><circle cx="48" cy="45" r="2.6" fill="url(#gV)"/><circle cx="37" cy="55" r="2.6" fill="url(#gV)"/></svg>
<div class="a" style="left:15px;top:416px;width:94px;height:47px;background:#000"></div>
<svg style="left:15px;top:416px" width="94" height="47" viewBox="0 0 94 47"><rect x="22" y="3" width="52" height="50" fill="none" stroke="#ccc" stroke-width="0.6"/><line x1="28" y1="13" x2="36" y2="4" stroke="#d09020" stroke-width="0.9"/><line x1="36" y1="4" x2="48" y2="19" stroke="#d09020" stroke-width="0.9"/><line x1="48" y1="19" x2="60" y2="4" stroke="#d09020" stroke-width="0.9"/><line x1="60" y1="4" x2="69" y2="13" stroke="#d09020" stroke-width="0.9"/><line x1="28" y1="13" x2="48" y2="42" stroke="#d09020" stroke-width="0.9"/><line x1="69" y1="13" x2="48" y2="42" stroke="#d09020" stroke-width="0.9"/><line x1="40" y1="28" x2="48" y2="19" stroke="#d09020" stroke-width="0.9"/><line x1="48" y1="19" x2="56" y2="28" stroke="#d09020" stroke-width="0.9"/><line x1="56" y1="28" x2="48" y2="38" stroke="#d09020" stroke-width="0.9"/><line x1="48" y1="38" x2="40" y2="28" stroke="#d09020" stroke-width="0.9"/><line x1="40" y1="28" x2="56" y2="28" stroke="#d09020" stroke-width="0.9"/><line x1="48" y1="19" x2="48" y2="38" stroke="#d09020" stroke-width="0.9"/><path d="M48 19L56 28L48 37L40 28Z" fill="none" stroke="#e0a030" stroke-width="1.8"/><circle cx="41" cy="11" r="1.8" fill="#d81818"/><circle cx="55" cy="11" r="1.8" fill="#d81818"/><circle cx="34" cy="22" r="1.8" fill="#d81818"/><circle cx="62" cy="22" r="1.8" fill="#d81818"/><circle cx="34" cy="36" r="1.8" fill="#d81818"/><circle cx="62" cy="36" r="1.8" fill="#d81818"/><circle cx="48" cy="38" r="1.8" fill="#d81818"/><circle cx="48" cy="19" r="1.8" fill="#d81818"/><circle cx="36" cy="4" r="2.5" fill="url(#gV)"/><circle cx="60" cy="4" r="2.5" fill="url(#gV)"/><circle cx="28" cy="13" r="2.5" fill="url(#gV)"/><circle cx="69" cy="13" r="2.5" fill="url(#gV)"/><circle cx="40" cy="28" r="2.5" fill="url(#gV)"/><circle cx="56" cy="28" r="2.5" fill="url(#gV)"/><circle cx="48" cy="19" r="2.5" fill="url(#gV)"/><circle cx="48" cy="37" r="2.5" fill="url(#gV)"/><circle cx="28" cy="45" r="2.5" fill="url(#gV)"/><circle cx="69" cy="45" r="2.5" fill="url(#gV)"/></svg>
<div class="a" style="left:133px;top:51px;width:811px;height:107px;background:#fff"></div>
<div class="a" style="left:133px;top:51px;width:811px;height:1px;background:#dde3ea"></div>
<div class="a" style="left:134px;top:52px;width:13px;height:105px;background:#f0f0f0;border-right:1px solid #d0d0d0"></div>
<svg style="left:137px;top:55px" width="8" height="8" viewBox="0 0 8 8"><path d="M1 1L7 7M7 1L1 7" stroke="#555" stroke-width="1.1"/></svg>
<svg style="left:137px;top:143px" width="8" height="8" viewBox="0 0 8 8"><path d="M7 7L1.5 1.5M1 1H5M1 1V5" stroke="#555" stroke-width="1.1" fill="none"/></svg>
<div class="a" style="left:147px;top:52px;width:785px;height:14px;background:linear-gradient(#fff,#f1f2f4);border-bottom:1px solid #dcdee2"></div>
<div class="a" style="left:185.8px;top:52px;width:1px;height:13px;background:#e4e6ea"></div>
<div class="a" style="left:263.8px;top:52px;width:1px;height:13px;background:#e4e6ea"></div>
<div class="a" style="left:302.8px;top:52px;width:1px;height:13px;background:#e4e6ea"></div>
<div class="a" style="left:341.2px;top:52px;width:1px;height:13px;background:#e4e6ea"></div>
<div class="a" style="left:419.4px;top:52px;width:1px;height:13px;background:#e4e6ea"></div>
<div class="a" style="left:497px;top:52px;width:1px;height:13px;background:#e4e6ea"></div>
<div class="a" style="left:536.6px;top:52px;width:1px;height:13px;background:#e4e6ea"></div>
<div class="a" style="left:671.3px;top:52px;width:1px;height:13px;background:#e4e6ea"></div>
<div class="t" style="left:150.5px;top:56px;font-size:8.2px;color:#222;">No.</div>
<div class="t" style="left:190px;top:56px;font-size:8.2px;color:#222;">Title</div>
<div class="t" style="left:263px;top:56px;font-size:8.2px;color:#222;width:35.5px;text-align:right">Pics</div>
<div class="t" style="left:306.5px;top:56px;font-size:8.2px;color:#222;">Code</div>
<div class="t" style="left:345.9px;top:56px;font-size:8.2px;color:#222;">Formula sum</div>
<div class="t" style="left:423.7px;top:56px;font-size:8.2px;color:#222;">HM symbol</div>
<div class="t" style="left:490px;top:56px;font-size:8.2px;color:#222;width:43px;text-align:right">SGR no.</div>
<div class="t" style="left:540.8px;top:56px;font-size:8.2px;color:#222;">Cell parameters</div>
<svg style="left:150px;top:67.5px" width="9" height="9" viewBox="0 0 9 9"><rect x="0" y="0" width="9" height="9" fill="#fff"/><line x1="0.5" y1="0" x2="0.5" y2="9" stroke="#b0b0b0" stroke-width="0.5"/><line x1="0" y1="0.5" x2="9" y2="0.5" stroke="#b0b0b0" stroke-width="0.5"/><line x1="2.5" y1="0" x2="2.5" y2="9" stroke="#b0b0b0" stroke-width="0.5"/><line x1="0" y1="2.5" x2="9" y2="2.5" stroke="#b0b0b0" stroke-width="0.5"/><line x1="4.5" y1="0" x2="4.5" y2="9" stroke="#b0b0b0" stroke-width="0.5"/><line x1="0" y1="4.5" x2="9" y2="4.5" stroke="#b0b0b0" stroke-width="0.5"/><line x1="6.5" y1="0" x2="6.5" y2="9" stroke="#b0b0b0" stroke-width="0.5"/><line x1="0" y1="6.5" x2="9" y2="6.5" stroke="#b0b0b0" stroke-width="0.5"/><line x1="8.5" y1="0" x2="8.5" y2="9" stroke="#b0b0b0" stroke-width="0.5"/><line x1="0" y1="8.5" x2="9" y2="8.5" stroke="#b0b0b0" stroke-width="0.5"/></svg>
<div class="a" style="left:160px;top:66.0px;width:25.8px;height:12.3px;background:#a8e0b8"></div>
<div class="t" style="left:161px;top:69.4px;font-size:8.2px;color:#1a1a1a;letter-spacing:-0.4px">14</div>
<div class="t" style="left:190px;top:69.4px;font-size:8.2px;color:#1a1a1a;letter-spacing:-0.55px">1250106</div>
<div class="t" style="left:263px;top:69.4px;font-size:8.2px;color:#1a1a1a;width:35.5px;text-align:right">1</div>
<div class="t" style="left:306.5px;top:69.4px;font-size:8.2px;color:#1a1a1a;letter-spacing:-0.55px">1250106</div>
<div class="t" style="left:345.9px;top:69.4px;font-size:8.2px;color:#1a1a1a;">O9V5</div>
<div class="t" style="left:423.7px;top:69.4px;font-size:8.2px;color:#1a1a1a;">B1-</div>
<div class="t" style="left:490px;top:69.4px;font-size:8.2px;color:#1a1a1a;width:43px;text-align:right;letter-spacing:-0.55px">2</div>
<div class="t" style="left:540.8px;top:69.4px;font-size:8.2px;color:#1a1a1a;letter-spacing:-0.55px">7.005,8.363,10.983,91.98,108.34,110.39</div>
<svg style="left:150px;top:79.8px" width="9" height="9" viewBox="0 0 9 9"><rect x="0" y="0" width="9" height="9" fill="#fff"/><line x1="0.5" y1="0" x2="0.5" y2="9" stroke="#b0b0b0" stroke-width="0.5"/><line x1="0" y1="0.5" x2="9" y2="0.5" stroke="#b0b0b0" stroke-width="0.5"/><line x1="2.5" y1="0" x2="2.5" y2="9" stroke="#b0b0b0" stroke-width="0.5"/><line x1="0" y1="2.5" x2="9" y2="2.5" stroke="#b0b0b0" stroke-width="0.5"/><line x1="4.5" y1="0" x2="4.5" y2="9" stroke="#b0b0b0" stroke-width="0.5"/><line x1="0" y1="4.5" x2="9" y2="4.5" stroke="#b0b0b0" stroke-width="0.5"/><line x1="6.5" y1="0" x2="6.5" y2="9" stroke="#b0b0b0" stroke-width="0.5"/><line x1="0" y1="6.5" x2="9" y2="6.5" stroke="#b0b0b0" stroke-width="0.5"/><line x1="8.5" y1="0" x2="8.5" y2="9" stroke="#b0b0b0" stroke-width="0.5"/><line x1="0" y1="8.5" x2="9" y2="8.5" stroke="#b0b0b0" stroke-width="0.5"/></svg>
<div class="a" style="left:160px;top:78.3px;width:25.8px;height:12.3px;background:#f7dc6a"></div>
<div class="t" style="left:161px;top:81.7px;font-size:8.2px;color:#1a1a1a;letter-spacing:-0.4px">15</div>
<div class="t" style="left:190px;top:81.7px;font-size:8.2px;color:#1a1a1a;letter-spacing:-0.55px">1250121</div>
<div class="t" style="left:263px;top:81.7px;font-size:8.2px;color:#1a1a1a;width:35.5px;text-align:right">1</div>
<div class="t" style="left:306.5px;top:81.7px;font-size:8.2px;color:#1a1a1a;letter-spacing:-0.55px">1250121</div>
<div class="t" style="left:345.9px;top:81.7px;font-size:8.2px;color:#1a1a1a;">O2V</div>
<div class="t" style="left:423.7px;top:81.7px;font-size:8.2px;color:#1a1a1a;">C1-</div>
<div class="t" style="left:490px;top:81.7px;font-size:8.2px;color:#1a1a1a;width:43px;text-align:right;letter-spacing:-0.55px">2</div>
<div class="t" style="left:540.8px;top:81.7px;font-size:8.2px;color:#1a1a1a;letter-spacing:-0.55px">9.060,5.772,4.520,89.99,91.40,89.83</div>
<svg style="left:150px;top:92.1px" width="9" height="9" viewBox="0 0 9 9"><rect x="0" y="0" width="9" height="9" fill="#fff"/><line x1="0.5" y1="0" x2="0.5" y2="9" stroke="#b0b0b0" stroke-width="0.5"/><line x1="0" y1="0.5" x2="9" y2="0.5" stroke="#b0b0b0" stroke-width="0.5"/><line x1="2.5" y1="0" x2="2.5" y2="9" stroke="#b0b0b0" stroke-width="0.5"/><line x1="0" y1="2.5" x2="9" y2="2.5" stroke="#b0b0b0" stroke-width="0.5"/><line x1="4.5" y1="0" x2="4.5" y2="9" stroke="#b0b0b0" stroke-width="0.5"/><line x1="0" y1="4.5" x2="9" y2="4.5" stroke="#b0b0b0" stroke-width="0.5"/><line x1="6.5" y1="0" x2="6.5" y2="9" stroke="#b0b0b0" stroke-width="0.5"/><line x1="0" y1="6.5" x2="9" y2="6.5" stroke="#b0b0b0" stroke-width="0.5"/><line x1="8.5" y1="0" x2="8.5" y2="9" stroke="#b0b0b0" stroke-width="0.5"/><line x1="0" y1="8.5" x2="9" y2="8.5" stroke="#b0b0b0" stroke-width="0.5"/></svg>
<div class="a" style="left:160px;top:90.6px;width:25.8px;height:12.3px;background:#d9c3f3"></div>
<div class="t" style="left:161px;top:94.0px;font-size:8.2px;color:#1a1a1a;letter-spacing:-0.4px">16</div>
<div class="t" style="left:190px;top:94.0px;font-size:8.2px;color:#1a1a1a;letter-spacing:-0.55px">1250180</div>
<div class="t" style="left:263px;top:94.0px;font-size:8.2px;color:#1a1a1a;width:35.5px;text-align:right">1</div>
<div class="t" style="left:306.5px;top:94.0px;font-size:8.2px;color:#1a1a1a;letter-spacing:-0.55px">1250180</div>
<div class="t" style="left:345.9px;top:94.0px;font-size:8.2px;color:#1a1a1a;">O2V</div>
<div class="t" style="left:423.7px;top:94.0px;font-size:8.2px;color:#1a1a1a;">C 1 2/m 1</div>
<div class="t" style="left:490px;top:94.0px;font-size:8.2px;color:#1a1a1a;width:43px;text-align:right;letter-spacing:-0.55px">12</div>
<div class="t" style="left:540.8px;top:94.0px;font-size:8.2px;color:#1a1a1a;letter-spacing:-0.55px">12.093,3.702,6.433,90.00,106.97,90.00</div>
<svg style="left:150px;top:104.4px" width="9" height="9" viewBox="0 0 9 9"><rect x="0" y="0" width="9" height="9" fill="#fff"/><line x1="0.5" y1="0" x2="0.5" y2="9" stroke="#b0b0b0" stroke-width="0.5"/><line x1="0" y1="0.5" x2="9" y2="0.5" stroke="#b0b0b0" stroke-width="0.5"/><line x1="2.5" y1="0" x2="2.5" y2="9" stroke="#b0b0b0" stroke-width="0.5"/><line x1="0" y1="2.5" x2="9" y2="2.5" stroke="#b0b0b0" stroke-width="0.5"/><line x1="4.5" y1="0" x2="4.5" y2="9" stroke="#b0b0b0" stroke-width="0.5"/><line x1="0" y1="4.5" x2="9" y2="4.5" stroke="#b0b0b0" stroke-width="0.5"/><line x1="6.5" y1="0" x2="6.5" y2="9" stroke="#b0b0b0" stroke-width="0.5"/><line x1="0" y1="6.5" x2="9" y2="6.5" stroke="#b0b0b0" stroke-width="0.5"/><line x1="8.5" y1="0" x2="8.5" y2="9" stroke="#b0b0b0" stroke-width="0.5"/><line x1="0" y1="8.5" x2="9" y2="8.5" stroke="#b0b0b0" stroke-width="0.5"/></svg>
<div class="a" style="left:160px;top:102.9px;width:25.8px;height:12.3px;background:#a9d6fa"></div>
<div class="t" style="left:161px;top:106.30000000000001px;font-size:8.2px;color:#1a1a1a;letter-spacing:-0.4px">17</div>
<div class="t" style="left:190px;top:106.30000000000001px;font-size:8.2px;color:#1a1a1a;letter-spacing:-0.55px">1250679</div>
<div class="t" style="left:263px;top:106.30000000000001px;font-size:8.2px;color:#1a1a1a;width:35.5px;text-align:right">1</div>
<div class="t" style="left:306.5px;top:106.30000000000001px;font-size:8.2px;color:#1a1a1a;letter-spacing:-0.55px">1250679</div>
<div class="t" style="left:345.9px;top:106.30000000000001px;font-size:8.2px;color:#1a1a1a;">O13V6</div>
<div class="t" style="left:423.7px;top:106.30000000000001px;font-size:8.2px;color:#1a1a1a;">C m m a</div>
<div class="t" style="left:490px;top:106.30000000000001px;font-size:8.2px;color:#1a1a1a;width:43px;text-align:right;letter-spacing:-0.55px">67</div>
<div class="t" style="left:540.8px;top:106.30000000000001px;font-size:8.2px;color:#1a1a1a;letter-spacing:-0.55px">11.922,19.912,3.680,90.00,90.00,90.00</div>
<svg style="left:150px;top:116.7px" width="9" height="9" viewBox="0 0 9 9"><rect x="0" y="0" width="9" height="9" fill="#fff"/><line x1="0.5" y1="0" x2="0.5" y2="9" stroke="#b0b0b0" stroke-width="0.5"/><line x1="0" y1="0.5" x2="9" y2="0.5" stroke="#b0b0b0" stroke-width="0.5"/><line x1="2.5" y1="0" x2="2.5" y2="9" stroke="#b0b0b0" stroke-width="0.5"/><line x1="0" y1="2.5" x2="9" y2="2.5" stroke="#b0b0b0" stroke-width="0.5"/><line x1="4.5" y1="0" x2="4.5" y2="9" stroke="#b0b0b0" stroke-width="0.5"/><line x1="0" y1="4.5" x2="9" y2="4.5" stroke="#b0b0b0" stroke-width="0.5"/><line x1="6.5" y1="0" x2="6.5" y2="9" stroke="#b0b0b0" stroke-width="0.5"/><line x1="0" y1="6.5" x2="9" y2="6.5" stroke="#b0b0b0" stroke-width="0.5"/><line x1="8.5" y1="0" x2="8.5" y2="9" stroke="#b0b0b0" stroke-width="0.5"/><line x1="0" y1="8.5" x2="9" y2="8.5" stroke="#b0b0b0" stroke-width="0.5"/></svg>
<div class="a" style="left:160px;top:115.2px;width:25.8px;height:12.3px;background:#a8e0b8"></div>
<div class="t" style="left:161px;top:118.60000000000001px;font-size:8.2px;color:#1a1a1a;letter-spacing:-0.4px">18</div>
<div class="t" style="left:190px;top:118.60000000000001px;font-size:8.2px;color:#1a1a1a;letter-spacing:-0.55px">1252234</div>
<div class="t" style="left:263px;top:118.60000000000001px;font-size:8.2px;color:#1a1a1a;width:35.5px;text-align:right">1</div>
<div class="t" style="left:306.5px;top:118.60000000000001px;font-size:8.2px;color:#1a1a1a;letter-spacing:-0.55px">1252234</div>
<div class="t" style="left:345.9px;top:118.60000000000001px;font-size:8.2px;color:#1a1a1a;">O2V</div>
<div class="t" style="left:423.7px;top:118.60000000000001px;font-size:8.2px;color:#1a1a1a;">P 42/n c m</div>
<div class="t" style="left:490px;top:118.60000000000001px;font-size:8.2px;color:#1a1a1a;width:43px;text-align:right;letter-spacing:-0.55px">138</div>
<div class="t" style="left:540.8px;top:118.60000000000001px;font-size:8.2px;color:#1a1a1a;letter-spacing:-0.55px">8.434,8.434,7.678,90.00,90.00,90.00</div>
<div class="a" style="left:147px;top:127.5px;width:524px;height:12.3px;background:#3399ff"></div>
<svg style="left:150px;top:129.0px" width="9" height="9" viewBox="0 0 9 9"><rect x="0" y="0" width="9" height="9" fill="#cfe4ff"/><line x1="0.5" y1="0" x2="0.5" y2="9" stroke="#6a9ad0" stroke-width="0.5"/><line x1="0" y1="0.5" x2="9" y2="0.5" stroke="#6a9ad0" stroke-width="0.5"/><line x1="2.5" y1="0" x2="2.5" y2="9" stroke="#6a9ad0" stroke-width="0.5"/><line x1="0" y1="2.5" x2="9" y2="2.5" stroke="#6a9ad0" stroke-width="0.5"/><line x1="4.5" y1="0" x2="4.5" y2="9" stroke="#6a9ad0" stroke-width="0.5"/><line x1="0" y1="4.5" x2="9" y2="4.5" stroke="#6a9ad0" stroke-width="0.5"/><line x1="6.5" y1="0" x2="6.5" y2="9" stroke="#6a9ad0" stroke-width="0.5"/><line x1="0" y1="6.5" x2="9" y2="6.5" stroke="#6a9ad0" stroke-width="0.5"/><line x1="8.5" y1="0" x2="8.5" y2="9" stroke="#6a9ad0" stroke-width="0.5"/><line x1="0" y1="8.5" x2="9" y2="8.5" stroke="#6a9ad0" stroke-width="0.5"/></svg>
<div class="a" style="left:160px;top:127.5px;width:25.8px;height:12.3px;background:#3399ff"></div>
<div class="t" style="left:161px;top:130.9px;font-size:8.2px;color:#fff;letter-spacing:-0.4px">19</div>
<div class="t" style="left:190px;top:130.9px;font-size:8.2px;color:#fff;letter-spacing:-0.55px">1252235</div>
<div class="t" style="left:263px;top:130.9px;font-size:8.2px;color:#fff;width:35.5px;text-align:right">1</div>
<div class="t" style="left:306.5px;top:130.9px;font-size:8.2px;color:#fff;letter-spacing:-0.55px">1252235</div>
<div class="t" style="left:345.9px;top:130.9px;font-size:8.2px;color:#fff;">O2V</div>
<div class="t" style="left:423.7px;top:130.9px;font-size:8.2px;color:#fff;">P 4/n c c</div>
<div class="t" style="left:490px;top:130.9px;font-size:8.2px;color:#fff;width:43px;text-align:right;letter-spacing:-0.55px">130</div>
<div class="t" style="left:540.8px;top:130.9px;font-size:8.2px;color:#fff;letter-spacing:-0.55px">8.440,8.440,7.666,90.00,90.00,90.00</div>
<svg style="left:150px;top:141.3px" width="9" height="9" viewBox="0 0 9 9"><rect x="0" y="0" width="9" height="9" fill="#fff"/><line x1="0.5" y1="0" x2="0.5" y2="9" stroke="#b0b0b0" stroke-width="0.5"/><line x1="0" y1="0.5" x2="9" y2="0.5" stroke="#b0b0b0" stroke-width="0.5"/><line x1="2.5" y1="0" x2="2.5" y2="9" stroke="#b0b0b0" stroke-width="0.5"/><line x1="0" y1="2.5" x2="9" y2="2.5" stroke="#b0b0b0" stroke-width="0.5"/><line x1="4.5" y1="0" x2="4.5" y2="9" stroke="#b0b0b0" stroke-width="0.5"/><line x1="0" y1="4.5" x2="9" y2="4.5" stroke="#b0b0b0" stroke-width="0.5"/><line x1="6.5" y1="0" x2="6.5" y2="9" stroke="#b0b0b0" stroke-width="0.5"/><line x1="0" y1="6.5" x2="9" y2="6.5" stroke="#b0b0b0" stroke-width="0.5"/><line x1="8.5" y1="0" x2="8.5" y2="9" stroke="#b0b0b0" stroke-width="0.5"/><line x1="0" y1="8.5" x2="9" y2="8.5" stroke="#b0b0b0" stroke-width="0.5"/></svg>
<div class="a" style="left:160px;top:139.8px;width:25.8px;height:12.3px;background:#d9c3f3"></div>
<div class="t" style="left:161px;top:143.20000000000002px;font-size:8.2px;color:#1a1a1a;letter-spacing:-0.4px">20</div>
<div class="t" style="left:190px;top:143.20000000000002px;font-size:8.2px;color:#1a1a1a;letter-spacing:-0.55px">1252236</div>
<div class="t" style="left:263px;top:143.20000000000002px;font-size:8.2px;color:#1a1a1a;width:35.5px;text-align:right">1</div>
<div class="t" style="left:306.5px;top:143.20000000000002px;font-size:8.2px;color:#1a1a1a;letter-spacing:-0.55px">1252236</div>
<div class="t" style="left:345.9px;top:143.20000000000002px;font-size:8.2px;color:#1a1a1a;">O2V</div>
<div class="t" style="left:423.7px;top:143.20000000000002px;font-size:8.2px;color:#1a1a1a;">I 4/m</div>
<div class="t" style="left:490px;top:143.20000000000002px;font-size:8.2px;color:#1a1a1a;width:43px;text-align:right;letter-spacing:-0.55px">87</div>
<div class="t" style="left:540.8px;top:143.20000000000002px;font-size:8.2px;color:#1a1a1a;letter-spacing:-0.55px">8.476,8.476,3.824,90.00,90.00,90.00</div>
<div class="a" style="left:932px;top:52px;width:12px;height:105px;background:#f0f0f0;border-left:1px solid #e6e6e6"></div>
<svg style="left:935px;top:57px" width="6" height="4" viewBox="0 0 6 4"><path d="M0 4H6L3 0Z" fill="#555"/></svg>
<div class="a" style="left:933px;top:115px;width:10px;height:27px;background:linear-gradient(90deg,#f6f6f6,#dedede);border:1px solid #9c9c9c;border-radius:2px"></div>
<div class="a" style="left:936px;top:125.0px;width:4px;height:1px;background:#777"></div>
<div class="a" style="left:936px;top:127.5px;width:4px;height:1px;background:#777"></div>
<div class="a" style="left:936px;top:130.0px;width:4px;height:1px;background:#777"></div>
<svg style="left:935px;top:148px" width="6" height="4" viewBox="0 0 6 4"><path d="M0 0H6L3 4Z" fill="#555"/></svg>
<div class="a" style="left:133px;top:157px;width:811px;height:1px;background:#a8b0bc"></div>
<div class="a" style="left:133px;top:158px;width:517px;height:18px;background:#f6f6f7"></div>
<svg style="left:137px;top:162px" width="8" height="7" viewBox="0 0 8 7"><rect x="0" y="0" width="3" height="2.5" fill="#666"/><rect x="5" y="0" width="3" height="2.5" fill="#666"/><rect x="0" y="4" width="3" height="2.5" fill="#666"/><rect x="5" y="4" width="3" height="2.5" fill="#666"/></svg>
<div class="a" style="left:151.2px;top:160.3px;width:97.20000000000002px;height:13.5px;background:linear-gradient(#e8f4fc 0px,#b6dcf8 2px);border:1px solid #c0c6ce;border-bottom:none"></div>
<svg style="left:156.2px;top:163px" width="8" height="8" viewBox="0 0 8 8"><path d="M0.8 2.2L2.2 0.8L5.2 3.8L3.8 5.2Z" fill="#787c84"/><path d="M3 5L7.5 7.5M1.5 4.5L4.5 1.5" stroke="#787c84" stroke-width="1.1"/></svg>
<div class="t" style="left:169.2px;top:164.8px;font-size:7.6px;color:#1a1a1a;letter-spacing:-0.3px">1250679 :: Picture 1</div>
<div class="a" style="left:248.4px;top:160.3px;width:98.4px;height:13.5px;background:linear-gradient(#e8f4fc 0px,#b2e2c4 2px);border:1px solid #c0c6ce;border-bottom:none"></div>
<svg style="left:253.4px;top:163px" width="8" height="8" viewBox="0 0 8 8"><path d="M0.8 2.2L2.2 0.8L5.2 3.8L3.8 5.2Z" fill="#787c84"/><path d="M3 5L7.5 7.5M1.5 4.5L4.5 1.5" stroke="#787c84" stroke-width="1.1"/></svg>
<div class="t" style="left:266.4px;top:164.8px;font-size:7.6px;color:#1a1a1a;letter-spacing:-0.3px">1252234 :: Picture 1</div>
<div class="a" style="left:346.8px;top:158.5px;width:100.0px;height:16px;background:linear-gradient(#fdf0b0,#f8e27a 40%);border:1px solid #d0c070;border-bottom:none"></div>
<svg style="left:351.8px;top:163px" width="8" height="8" viewBox="0 0 8 8"><path d="M0.8 2.2L2.2 0.8L5.2 3.8L3.8 5.2Z" fill="#1a2a90"/><path d="M3 5L7.5 7.5M1.5 4.5L4.5 1.5" stroke="#1a2a90" stroke-width="1.1"/></svg>
<div class="t" style="left:363.8px;top:164.8px;font-size:7.6px;color:#1a1a1a;letter-spacing:-0.3px">1252235 :: Picture 1</div>
<div class="a" style="left:446.8px;top:160.3px;width:96.59999999999997px;height:13.5px;background:linear-gradient(#e8f4fc 0px,#d9c4f2 2px);border:1px solid #c0c6ce;border-bottom:none"></div>
<svg style="left:451.8px;top:163px" width="8" height="8" viewBox="0 0 8 8"><path d="M0.8 2.2L2.2 0.8L5.2 3.8L3.8 5.2Z" fill="#787c84"/><path d="M3 5L7.5 7.5M1.5 4.5L4.5 1.5" stroke="#787c84" stroke-width="1.1"/></svg>
<div class="t" style="left:464.8px;top:164.8px;font-size:7.6px;color:#1a1a1a;letter-spacing:-0.3px">1252236 :: Picture 1</div>
<div class="a" style="left:134px;top:173.5px;width:515px;height:2.7px;background:linear-gradient(#f6eab0,#ead278)"></div>
<svg style="left:551px;top:161px" width="11" height="10" viewBox="0 0 11 10"><rect x="0.5" y="1.5" width="9" height="8" fill="#fff" stroke="#5a6a80" stroke-width="0.8"/><rect x="0.5" y="1.5" width="9" height="2" fill="#8aa0c0"/><circle cx="2" cy="2" r="2" fill="#f8e860"/></svg>
<svg style="left:567.0px;top:166.0px" width="4" height="3" viewBox="0 0 4 3"><path d="M0 0H4L2 2.5Z" fill="#222"/></svg>
<svg style="left:575px;top:162px" width="11" height="9" viewBox="0 0 11 9"><rect x="0.5" y="0.5" width="6" height="8" fill="#fff" stroke="#5a6a80" stroke-width="0.8"/><rect x="5.5" y="2.5" width="5" height="6" fill="#dde" stroke="#5a6a80" stroke-width="0.8"/></svg>
<svg style="left:590px;top:161px" width="7" height="10" viewBox="0 0 7 10"><rect x="0.5" y="0.5" width="6" height="9" fill="#e8ecf2" stroke="#5a6a80" stroke-width="0.8"/><path d="M2 3H5M2 5H5M2 7H5" stroke="#333" stroke-width="0.8"/></svg>
<div class="t" style="left:639.5px;top:161px;font-size:10.5px;color:#333;">&#187;</div>
<div class="a" style="left:134px;top:176px;width:515px;height:205px;background:#000"></div>
<div class="t" style="left:168.5px;top:176.5px;font-size:7px;color:#ddd;">b</div>
<div class="t" style="left:199px;top:206.5px;font-size:7px;color:#ddd;">a</div>
<svg style="left:165px;top:185px" width="34" height="32" viewBox="0 0 34 32"><path d="M6 3V27.5H27" stroke="#eee" stroke-width="1" fill="none"/><path d="M6 1L3.8 7H8.2Z" fill="#fff"/><path d="M30 27.5L24 25.3V29.7Z" fill="#fff"/></svg>
<svg style="left:313.4px;top:200.1px" width="156.0" height="157.0" viewBox="0 0 156 157"><rect x="0" y="0" width="156" height="156.5" fill="none" stroke="#d8d8d8" stroke-width="1"/><line x1="40.4" y1="8.9" x2="10.1" y2="40.0" stroke="#dca424" stroke-width="1.4"/><line x1="36.8" y1="5.5" x2="6.5" y2="36.6" stroke="#dca424" stroke-width="1.4"/><line x1="40.4" y1="5.4" x2="72.2" y2="37.8" stroke="#dca424" stroke-width="1.4"/><line x1="36.8" y1="9.0" x2="68.6" y2="41.4" stroke="#dca424" stroke-width="1.4"/><line x1="10.1" y1="36.5" x2="41.7" y2="67.6" stroke="#dca424" stroke-width="1.4"/><line x1="6.5" y1="40.1" x2="38.1" y2="71.2" stroke="#dca424" stroke-width="1.4"/><line x1="72.1" y1="41.4" x2="41.6" y2="71.2" stroke="#dca424" stroke-width="1.4"/><line x1="68.7" y1="37.8" x2="38.2" y2="67.6" stroke="#dca424" stroke-width="1.4"/><line x1="119.4" y1="87.5" x2="87.8" y2="119.1" stroke="#dca424" stroke-width="1.4"/><line x1="115.8" y1="83.9" x2="84.2" y2="115.5" stroke="#dca424" stroke-width="1.4"/><line x1="119.4" y1="84.0" x2="149.9" y2="115.6" stroke="#dca424" stroke-width="1.4"/><line x1="115.8" y1="87.4" x2="146.3" y2="119.0" stroke="#dca424" stroke-width="1.4"/><line x1="87.7" y1="115.5" x2="119.3" y2="145.3" stroke="#dca424" stroke-width="1.4"/><line x1="84.3" y1="119.1" x2="115.9" y2="148.9" stroke="#dca424" stroke-width="1.4"/><line x1="149.8" y1="119.1" x2="119.3" y2="148.9" stroke="#dca424" stroke-width="1.4"/><line x1="146.4" y1="115.5" x2="115.9" y2="145.3" stroke="#dca424" stroke-width="1.4"/><line x1="70.4" y1="39.6" x2="92.5" y2="64.3" stroke="#dca424" stroke-width="1.4"/><line x1="92.5" y1="64.3" x2="117.6" y2="85.7" stroke="#dca424" stroke-width="1.4"/><line x1="39.9" y1="69.4" x2="63.6" y2="92.2" stroke="#dca424" stroke-width="1.4"/><line x1="63.6" y1="92.2" x2="86.0" y2="117.3" stroke="#dca424" stroke-width="1.4"/><line x1="70.4" y1="39.6" x2="92.5" y2="14.1" stroke="#dca424" stroke-width="1.4"/><line x1="117.6" y1="85.7" x2="142.4" y2="64.3" stroke="#dca424" stroke-width="1.4"/><line x1="39.9" y1="69.4" x2="14.4" y2="92.2" stroke="#dca424" stroke-width="1.4"/><line x1="86.0" y1="117.3" x2="63.6" y2="142.1" stroke="#dca424" stroke-width="1.4"/><circle cx="92.5" cy="14.1" r="4.6" fill="url(#gO)"/><circle cx="142.4" cy="14.1" r="4.6" fill="url(#gO)"/><circle cx="39.4" cy="15.9" r="4.6" fill="url(#gO)"/><circle cx="92.5" cy="64.3" r="4.6" fill="url(#gO)"/><circle cx="142.4" cy="64.3" r="4.6" fill="url(#gO)"/><circle cx="39.4" cy="62.2" r="4.6" fill="url(#gO)"/><circle cx="14.4" cy="92.2" r="4.6" fill="url(#gO)"/><circle cx="63.6" cy="92.2" r="4.6" fill="url(#gO)"/><circle cx="94.6" cy="117.1" r="4.6" fill="url(#gO)"/><circle cx="140.9" cy="117.1" r="4.6" fill="url(#gO)"/><circle cx="14.4" cy="142.1" r="4.6" fill="url(#gO)"/><circle cx="63.6" cy="142.1" r="4.6" fill="url(#gO)"/><circle cx="33.6" cy="7.2" r="6.4" fill="url(#gV)"/><circle cx="43.7" cy="7.2" r="6.4" fill="url(#gV)"/><circle cx="8.3" cy="33.3" r="6.4" fill="url(#gV)"/><circle cx="8.3" cy="43.4" r="6.4" fill="url(#gV)"/><circle cx="70.4" cy="35.1" r="6.4" fill="url(#gV)"/><circle cx="70.4" cy="44.1" r="6.4" fill="url(#gV)"/><circle cx="35.4" cy="69.4" r="6.4" fill="url(#gV)"/><circle cx="44.4" cy="69.4" r="6.4" fill="url(#gV)"/><circle cx="113.1" cy="85.7" r="6.4" fill="url(#gV)"/><circle cx="122.1" cy="85.7" r="6.4" fill="url(#gV)"/><circle cx="86" cy="112.8" r="6.4" fill="url(#gV)"/><circle cx="86" cy="121.8" r="6.4" fill="url(#gV)"/><circle cx="148.1" cy="112.8" r="6.4" fill="url(#gV)"/><circle cx="148.1" cy="121.8" r="6.4" fill="url(#gV)"/><circle cx="113.1" cy="147.1" r="6.4" fill="url(#gV)"/><circle cx="122.1" cy="147.1" r="6.4" fill="url(#gV)"/><circle cx="14.4" cy="39.4" r="4.6" fill="url(#gO)"/><circle cx="116.7" cy="92.9" r="4.6" fill="url(#gO)"/><circle cx="117.4" cy="140.2" r="4.6" fill="url(#gO)"/><circle cx="63.2" cy="39.4" r="4.6" fill="url(#gO)"/></svg>
<div class="a" style="left:620px;top:351px;width:29px;height:30px;background:#000;border:1px solid #8a8a8a"></div>
<svg style="left:620px;top:351px" width="14" height="30" viewBox="0 0 14 30"><circle cx="7" cy="7" r="6" fill="url(#gV)"/><circle cx="7" cy="22.2" r="6" fill="url(#gO)"/></svg>
<div class="t" style="left:633px;top:354px;font-size:7.2px;color:#e8e8e8;letter-spacing:-0.2px">V+0</div>
<div class="t" style="left:633px;top:369.5px;font-size:7.2px;color:#e8e8e8;letter-spacing:-0.3px">O+0</div>
<div class="a" style="left:134px;top:381px;width:515px;height:82px;background:#fafafa;border-top:1px solid #9a9a9a"></div>
<div class="a" style="left:134px;top:383px;width:13px;height:80px;background:#efefef;border-right:1px solid #d6d6d6;border-top:1px solid #e0e0e0"></div>
<svg style="left:136px;top:387.5px" width="8" height="5" viewBox="0 0 8 5"><g fill="#707070"><rect x="0" y="0" width="2.2" height="2"/><rect x="2.9" y="0" width="2.2" height="2"/><rect x="5.8" y="0" width="2.2" height="2"/><rect x="0" y="2.8" width="2.2" height="2"/><rect x="2.9" y="2.8" width="2.2" height="2"/><rect x="5.8" y="2.8" width="2.2" height="2"/></g></svg>
<svg style="left:137px;top:454px" width="7" height="4" viewBox="0 0 7 4"><path d="M0 0H7L3.5 4Z" fill="#666"/></svg>
<div class="a" style="left:152.8px;top:388px;width:58.5px;height:51.5px;background:#addaf8;border:1px solid #c8ccd2;"></div>
<div class="a" style="left:157.3px;top:397.5px;width:49.5px;height:31px;background:#000"></div>
<div class="t" style="left:152.8px;top:442px;font-size:7.6px;color:#222;width:58.5px;text-align:center;letter-spacing:-0.2px">Picture 1</div>
<div class="a" style="left:218.4px;top:388px;width:58.5px;height:51.5px;background:#aee0bd;border:1px solid #c8ccd2;"></div>
<div class="a" style="left:222.9px;top:397.5px;width:49.5px;height:31px;background:#000"></div>
<div class="t" style="left:218.4px;top:442px;font-size:7.6px;color:#222;width:58.5px;text-align:center;letter-spacing:-0.2px">Picture 1</div>
<div class="a" style="left:284.0px;top:388px;width:58.5px;height:51.5px;background:#f7df6c;border:1px solid #c8ccd2;"></div>
<div class="a" style="left:288.5px;top:397.5px;width:49.5px;height:31px;background:#000"></div>
<div class="t" style="left:284.0px;top:442px;font-size:7.6px;color:#222;width:58.5px;text-align:center;letter-spacing:-0.2px">Picture 1</div>
<div class="a" style="left:349.6px;top:388px;width:58.5px;height:51.5px;background:#dcc4f2;border:1px solid #c8ccd2;"></div>
<div class="a" style="left:354.1px;top:397.5px;width:49.5px;height:31px;background:#000"></div>
<div class="t" style="left:349.6px;top:442px;font-size:7.6px;color:#222;width:58.5px;text-align:center;letter-spacing:-0.2px">Picture 1</div>
<div class="a" style="left:415.2px;top:388px;width:58.5px;height:51.5px;background:#addaf8;border:1px solid #c8ccd2;"></div>
<div class="a" style="left:419.7px;top:397.5px;width:49.5px;height:31px;background:#000"></div>
<div class="t" style="left:415.2px;top:442px;font-size:7.6px;color:#222;width:58.5px;text-align:center;letter-spacing:-0.2px">Picture 1</div>
<div class="a" style="left:480.8px;top:388px;width:58.5px;height:51.5px;background:#aee0bd;border:1px solid #c8ccd2;"></div>
<div class="a" style="left:485.3px;top:397.5px;width:49.5px;height:31px;background:#000"></div>
<div class="t" style="left:480.8px;top:442px;font-size:7.6px;color:#222;width:58.5px;text-align:center;letter-spacing:-0.2px">Picture 1</div>
<div class="a" style="left:546.4px;top:388px;width:58.5px;height:51.5px;background:#f7df6c;border:1px solid #c8ccd2;"></div>
<div class="a" style="left:550.9px;top:397.5px;width:49.5px;height:31px;background:#000"></div>
<div class="t" style="left:546.4px;top:442px;font-size:7.6px;color:#222;width:58.5px;text-align:center;letter-spacing:-0.2px">Picture 1</div>
<div class="a" style="left:612.0px;top:388px;width:37.0px;height:51.5px;background:#dcc4f2;border:1px solid #c8ccd2;border-right:none"></div>
<div class="a" style="left:616.5px;top:397.5px;width:32.5px;height:31px;background:#000"></div>
<div class="t" style="left:612.0px;top:442px;font-size:7.6px;color:#222;width:58.5px;text-align:center;letter-spacing:-0.2px">Picture 1</div>
<svg style="left:157.3px;top:397.5px" width="49" height="31" viewBox="0 0 49 31"><path d="M4 17L10 11H46L40 19H4ZM4 17V20M4 20H40L46 12M40 19V22" stroke="#aaa" stroke-width="0.5" fill="none"/><circle cx="12.0" cy="14" r="0.6" fill="#e33"/><circle cx="17.5" cy="16" r="0.6" fill="#e33"/><circle cx="23.0" cy="14" r="0.6" fill="#e33"/><circle cx="28.5" cy="16" r="0.6" fill="#e33"/><circle cx="34.0" cy="14" r="0.6" fill="#e33"/><circle cx="39.5" cy="16" r="0.6" fill="#e33"/></svg>
<svg style="left:222.9px;top:397.5px" width="49" height="31" viewBox="0 0 49 31"><path d="M4 17L10 11H46L40 19H4ZM4 17V20M4 20H40L46 12M40 19V22" stroke="#aaa" stroke-width="0.5" fill="none"/><circle cx="12.0" cy="14" r="0.6" fill="#e33"/><circle cx="17.5" cy="16" r="0.6" fill="#e33"/><circle cx="23.0" cy="14" r="0.6" fill="#e33"/><circle cx="28.5" cy="16" r="0.6" fill="#e33"/><circle cx="34.0" cy="14" r="0.6" fill="#e33"/><circle cx="39.5" cy="16" r="0.6" fill="#e33"/></svg>
<svg style="left:288.5px;top:397.5px" width="49" height="31" viewBox="0 0 49 31"><path d="M10 5H38L40 24H8ZM14 8H36L37 21H12Z" stroke="#bbb" stroke-width="0.5" fill="none"/><circle cx="10" cy="5" r="1" fill="#eee"/><circle cx="38" cy="5" r="1" fill="#eee"/><circle cx="40" cy="24" r="1" fill="#eee"/><circle cx="8" cy="24" r="1" fill="#eee"/><circle cx="14" cy="8" r="1" fill="#eee"/><circle cx="36" cy="8" r="1" fill="#eee"/><circle cx="12" cy="21" r="1" fill="#eee"/><circle cx="37" cy="21" r="1" fill="#eee"/><circle cx="20" cy="12" r="1" fill="#eee"/><circle cx="30" cy="14" r="1" fill="#eee"/><circle cx="24" cy="18" r="1" fill="#eee"/><circle cx="16" cy="10" r="0.8" fill="#e33"/><circle cx="23" cy="15" r="0.8" fill="#e33"/><circle cx="30" cy="20" r="0.8" fill="#e33"/><circle cx="37" cy="12" r="0.8" fill="#e33"/><circle cx="22" cy="17" r="0.8" fill="#e33"/><circle cx="29" cy="22" r="0.8" fill="#e33"/><circle cx="36" cy="14" r="0.8" fill="#e33"/><circle cx="21" cy="19" r="0.8" fill="#e33"/><circle cx="28" cy="11" r="0.8" fill="#e33"/><circle cx="35" cy="16" r="0.8" fill="#e33"/><path d="M14 12L22 10L30 13L36 11M14 18L24 16L34 19" stroke="#c63" stroke-width="0.5" fill="none"/></svg>
<svg style="left:354.1px;top:397.5px" width="49" height="31" viewBox="0 0 49 31"><path d="M10 5H38L40 24H8ZM14 8H36L37 21H12Z" stroke="#bbb" stroke-width="0.5" fill="none"/><circle cx="10" cy="5" r="1" fill="#eee"/><circle cx="38" cy="5" r="1" fill="#eee"/><circle cx="40" cy="24" r="1" fill="#eee"/><circle cx="8" cy="24" r="1" fill="#eee"/><circle cx="14" cy="8" r="1" fill="#eee"/><circle cx="36" cy="8" r="1" fill="#eee"/><circle cx="12" cy="21" r="1" fill="#eee"/><circle cx="37" cy="21" r="1" fill="#eee"/><circle cx="20" cy="12" r="1" fill="#eee"/><circle cx="30" cy="14" r="1" fill="#eee"/><circle cx="24" cy="18" r="1" fill="#eee"/><circle cx="16" cy="10" r="0.8" fill="#e33"/><circle cx="23" cy="15" r="0.8" fill="#e33"/><circle cx="30" cy="20" r="0.8" fill="#e33"/><circle cx="37" cy="12" r="0.8" fill="#e33"/><circle cx="22" cy="17" r="0.8" fill="#e33"/><circle cx="29" cy="22" r="0.8" fill="#e33"/><circle cx="36" cy="14" r="0.8" fill="#e33"/><circle cx="21" cy="19" r="0.8" fill="#e33"/><circle cx="28" cy="11" r="0.8" fill="#e33"/><circle cx="35" cy="16" r="0.8" fill="#e33"/><path d="M14 12L22 10L30 13L36 11M14 18L24 16L34 19" stroke="#c63" stroke-width="0.5" fill="none"/></svg>
<svg style="left:419.7px;top:397.5px" width="49" height="31" viewBox="0 0 49 31"><path d="M8 6H44L40 24H4Z" stroke="#999" stroke-width="0.5" fill="none"/><path d="M8 15L14 10L20 18L26 10L32 18L38 10L44 16" stroke="#c93" stroke-width="0.6" fill="none"/><circle cx="14" cy="10" r="1.3" fill="#eee"/><circle cx="20" cy="18" r="1.3" fill="#eee"/><circle cx="26" cy="10" r="1.3" fill="#eee"/><circle cx="32" cy="18" r="1.3" fill="#eee"/><circle cx="38" cy="10" r="1.3" fill="#eee"/><circle cx="8" cy="15" r="1.3" fill="#eee"/><circle cx="6.0" cy="5" r="0.7" fill="#e33"/><circle cx="9.5" cy="14" r="0.7" fill="#e33"/><circle cx="13.0" cy="23" r="0.7" fill="#e33"/><circle cx="16.5" cy="5" r="0.7" fill="#e33"/><circle cx="20.0" cy="14" r="0.7" fill="#e33"/><circle cx="23.5" cy="23" r="0.7" fill="#e33"/><circle cx="27.0" cy="5" r="0.7" fill="#e33"/><circle cx="30.5" cy="14" r="0.7" fill="#e33"/><circle cx="34.0" cy="23" r="0.7" fill="#e33"/><circle cx="37.5" cy="5" r="0.7" fill="#e33"/><circle cx="41.0" cy="14" r="0.7" fill="#e33"/><circle cx="44.5" cy="23" r="0.7" fill="#e33"/></svg>
<svg style="left:485.3px;top:397.5px" width="49" height="31" viewBox="0 0 49 31"><path d="M4 4H46V27H4Z" stroke="#888" stroke-width="0.5" fill="none"/><path d="M6 10L14 7L22 11L30 7L38 11L45 8M6 20L14 17L22 21L30 17L38 21L45 18" stroke="#c93" stroke-width="0.6" fill="none"/><circle cx="6" cy="8" r="1" fill="#eee"/><circle cx="9" cy="13" r="1" fill="#eee"/><circle cx="12" cy="18" r="1" fill="#eee"/><circle cx="15" cy="23" r="1" fill="#eee"/><circle cx="18" cy="8" r="1" fill="#eee"/><circle cx="21" cy="13" r="1" fill="#eee"/><circle cx="24" cy="18" r="1" fill="#eee"/><circle cx="27" cy="23" r="1" fill="#eee"/><circle cx="30" cy="8" r="1" fill="#eee"/><circle cx="33" cy="13" r="1" fill="#eee"/><circle cx="36" cy="18" r="1" fill="#eee"/><circle cx="39" cy="23" r="1" fill="#eee"/><circle cx="42" cy="8" r="1" fill="#eee"/><circle cx="45" cy="13" r="1" fill="#eee"/><circle cx="5.0" cy="6" r="0.7" fill="#e33"/><circle cx="7.8" cy="13" r="0.7" fill="#e33"/><circle cx="10.6" cy="20" r="0.7" fill="#e33"/><circle cx="13.399999999999999" cy="7" r="0.7" fill="#e33"/><circle cx="16.2" cy="14" r="0.7" fill="#e33"/><circle cx="19.0" cy="21" r="0.7" fill="#e33"/><circle cx="21.799999999999997" cy="8" r="0.7" fill="#e33"/><circle cx="24.599999999999998" cy="15" r="0.7" fill="#e33"/><circle cx="27.4" cy="22" r="0.7" fill="#e33"/><circle cx="30.2" cy="9" r="0.7" fill="#e33"/><circle cx="33.0" cy="16" r="0.7" fill="#e33"/><circle cx="35.8" cy="23" r="0.7" fill="#e33"/><circle cx="38.599999999999994" cy="10" r="0.7" fill="#e33"/><circle cx="41.4" cy="17" r="0.7" fill="#e33"/><circle cx="44.199999999999996" cy="24" r="0.7" fill="#e33"/><circle cx="47.0" cy="11" r="0.7" fill="#e33"/></svg>
<svg style="left:550.9px;top:397.5px" width="49" height="31" viewBox="0 0 49 31"><path d="M4 4H46V27H4Z" stroke="#888" stroke-width="0.5" fill="none"/><path d="M6 10L14 7L22 11L30 7L38 11L45 8M6 20L14 17L22 21L30 17L38 21L45 18" stroke="#c93" stroke-width="0.6" fill="none"/><circle cx="6" cy="8" r="1" fill="#eee"/><circle cx="9" cy="13" r="1" fill="#eee"/><circle cx="12" cy="18" r="1" fill="#eee"/><circle cx="15" cy="23" r="1" fill="#eee"/><circle cx="18" cy="8" r="1" fill="#eee"/><circle cx="21" cy="13" r="1" fill="#eee"/><circle cx="24" cy="18" r="1" fill="#eee"/><circle cx="27" cy="23" r="1" fill="#eee"/><circle cx="30" cy="8" r="1" fill="#eee"/><circle cx="33" cy="13" r="1" fill="#eee"/><circle cx="36" cy="18" r="1" fill="#eee"/><circle cx="39" cy="23" r="1" fill="#eee"/><circle cx="42" cy="8" r="1" fill="#eee"/><circle cx="45" cy="13" r="1" fill="#eee"/><circle cx="5.0" cy="6" r="0.7" fill="#e33"/><circle cx="7.8" cy="13" r="0.7" fill="#e33"/><circle cx="10.6" cy="20" r="0.7" fill="#e33"/><circle cx="13.399999999999999" cy="7" r="0.7" fill="#e33"/><circle cx="16.2" cy="14" r="0.7" fill="#e33"/><circle cx="19.0" cy="21" r="0.7" fill="#e33"/><circle cx="21.799999999999997" cy="8" r="0.7" fill="#e33"/><circle cx="24.599999999999998" cy="15" r="0.7" fill="#e33"/><circle cx="27.4" cy="22" r="0.7" fill="#e33"/><circle cx="30.2" cy="9" r="0.7" fill="#e33"/><circle cx="33.0" cy="16" r="0.7" fill="#e33"/><circle cx="35.8" cy="23" r="0.7" fill="#e33"/><circle cx="38.599999999999994" cy="10" r="0.7" fill="#e33"/><circle cx="41.4" cy="17" r="0.7" fill="#e33"/><circle cx="44.199999999999996" cy="24" r="0.7" fill="#e33"/><circle cx="47.0" cy="11" r="0.7" fill="#e33"/></svg>
<div class="a" style="left:612px;top:397.5px;width:37px;height:31px;overflow:hidden"><svg style="left:0px;top:0px" width="49" height="31" viewBox="0 0 49 31"><path d="M8 6H44L40 24H4Z" stroke="#999" stroke-width="0.5" fill="none"/><path d="M8 15L14 10L20 18L26 10L32 18L38 10L44 16" stroke="#c93" stroke-width="0.6" fill="none"/><circle cx="14" cy="10" r="1.3" fill="#eee"/><circle cx="20" cy="18" r="1.3" fill="#eee"/><circle cx="26" cy="10" r="1.3" fill="#eee"/><circle cx="32" cy="18" r="1.3" fill="#eee"/><circle cx="38" cy="10" r="1.3" fill="#eee"/><circle cx="8" cy="15" r="1.3" fill="#eee"/><circle cx="6.0" cy="5" r="0.7" fill="#e33"/><circle cx="9.5" cy="14" r="0.7" fill="#e33"/><circle cx="13.0" cy="23" r="0.7" fill="#e33"/><circle cx="16.5" cy="5" r="0.7" fill="#e33"/><circle cx="20.0" cy="14" r="0.7" fill="#e33"/><circle cx="23.5" cy="23" r="0.7" fill="#e33"/><circle cx="27.0" cy="5" r="0.7" fill="#e33"/><circle cx="30.5" cy="14" r="0.7" fill="#e33"/><circle cx="34.0" cy="23" r="0.7" fill="#e33"/><circle cx="37.5" cy="5" r="0.7" fill="#e33"/><circle cx="41.0" cy="14" r="0.7" fill="#e33"/><circle cx="44.5" cy="23" r="0.7" fill="#e33"/></svg></div>
<div class="a" style="left:147px;top:451px;width:502px;height:10px;background:#f0f0f0"></div>
<svg style="left:151px;top:453px" width="4" height="6" viewBox="0 0 4 6"><path d="M4 0V6L0 3Z" fill="#555"/></svg>
<div class="a" style="left:160.5px;top:452px;width:225.5px;height:8px;background:linear-gradient(#f6f6f6,#dcdcdc);border:1px solid #a0a0a0;border-radius:2px"></div>
<div class="a" style="left:271.0px;top:454px;width:1px;height:4px;background:#777"></div>
<div class="a" style="left:273.5px;top:454px;width:1px;height:4px;background:#777"></div>
<div class="a" style="left:276.0px;top:454px;width:1px;height:4px;background:#777"></div>
<svg style="left:641px;top:453px" width="4" height="6" viewBox="0 0 4 6"><path d="M0 0V6L4 3Z" fill="#555"/></svg>
<div class="a" style="left:649px;top:158px;width:3px;height:305px;background:#f2f3f5"></div>
<div class="a" style="left:652px;top:158px;width:292px;height:305px;background:#fff;border-left:1px solid #b8c0cc"></div>
<div class="a" style="left:653px;top:158px;width:291px;height:16px;background:linear-gradient(#fafbfc,#eceef1);border-bottom:1px solid #d4d8de"></div>
<div class="t" style="left:658px;top:162px;font-size:7.8px;color:#1a1a1a;letter-spacing:-0.1px">Data sheet</div>
<div class="a" style="left:699px;top:170px;width:2px;height:1px;background:#888"></div>
<svg style="left:932px;top:162px" width="7" height="7" viewBox="0 0 7 7"><path d="M0.5 0.5L6.5 6.5M6.5 0.5L0.5 6.5" stroke="#555" stroke-width="1.2"/></svg>
<div class="a" style="left:932px;top:174px;width:12px;height:289px;background:#f0f0f0;border-left:1px solid #e6e6e6"></div>
<svg style="left:935px;top:178px" width="6" height="4" viewBox="0 0 6 4"><path d="M0 4H6L3 0Z" fill="#666"/></svg>
<svg style="left:935px;top:454px" width="6" height="4" viewBox="0 0 6 4"><path d="M0 0H6L3 4Z" fill="#888"/></svg>
<div class="a" style="left:660px;top:184.3px;width:254px;height:10px;background:#f8e06e"></div>
<div class="t" style="left:660px;top:185.20000000000002px;font-size:8.4px;color:#111;width:254px;text-align:center;font-weight:bold;letter-spacing:-0.3px">General</div>
<div class="a" style="left:660px;top:198.2px;width:60px;height:9.5px;background:#f8e06e"></div>
<div class="t" style="left:662px;top:199.29999999999998px;font-size:8.4px;color:#111;font-weight:bold;letter-spacing:-0.38px">Origin</div>
<div class="t" style="left:724.5px;top:199.0px;font-size:8.4px;color:#222;letter-spacing:-0.32px">1252235</div>
<div class="a" style="left:660px;top:208.3px;width:60px;height:9.5px;background:#f8e06e"></div>
<div class="t" style="left:662px;top:209.4px;font-size:8.4px;color:#111;font-weight:bold;letter-spacing:-0.38px">Formula</div>
<div class="t" style="left:724.5px;top:209.10000000000002px;font-size:8.4px;color:#222;letter-spacing:-0.32px">VO2(A) LTP</div>
<div class="a" style="left:660px;top:229px;width:254px;height:10px;background:#f8e06e"></div>
<div class="t" style="left:660px;top:229.9px;font-size:8.4px;color:#111;width:254px;text-align:center;font-weight:bold;letter-spacing:-0.3px">Bibliographic data</div>
<div class="a" style="left:660px;top:242.8px;width:60px;height:9.5px;background:#f8e06e"></div>
<div class="t" style="left:662px;top:243.9px;font-size:8.4px;color:#111;font-weight:bold;letter-spacing:-0.38px">Author(s)</div>
<div class="t" style="left:724.5px;top:243.60000000000002px;font-size:8.4px;color:#222;letter-spacing:-0.32px">Oka Y., Sato S., Yao T., Yamamoto N.</div>
<div class="a" style="left:660px;top:253px;width:60px;height:9.5px;background:#f8e06e"></div>
<div class="t" style="left:662px;top:254.1px;font-size:8.4px;color:#111;font-weight:bold;letter-spacing:-0.38px">Publication title</div>
<div class="t" style="left:724.5px;top:253.8px;font-size:8.4px;color:#222;letter-spacing:-0.32px">Crystal Structures and Transition Mechanism of VO2(A)</div>
<div class="a" style="left:660px;top:263.3px;width:60px;height:9.5px;background:#f8e06e"></div>
<div class="t" style="left:662px;top:264.40000000000003px;font-size:8.4px;color:#111;font-weight:bold;letter-spacing:-0.38px">Citation</div>
<div class="t" style="left:724.5px;top:264.1px;font-size:8.4px;color:#222;letter-spacing:-0.32px">Journal of Solid State Chemistry, 141, 594-598 (1998)</div>
<div class="a" style="left:660px;top:284.2px;width:254px;height:10px;background:#f8e06e"></div>
<div class="t" style="left:660px;top:285.09999999999997px;font-size:8.4px;color:#111;width:254px;text-align:center;font-weight:bold;letter-spacing:-0.3px">Phase data</div>
<div class="a" style="left:660px;top:298.3px;width:60px;height:9.5px;background:#f8e06e"></div>
<div class="t" style="left:662px;top:299.40000000000003px;font-size:8.4px;color:#111;font-weight:bold;letter-spacing:-0.38px">Space-group</div>
<div class="t" style="left:724.5px;top:299.1px;font-size:8.4px;color:#222;letter-spacing:-0.32px">P 4/n c c (130) - tetragonal</div>
<div class="a" style="left:660px;top:309px;width:60px;height:30.5px;background:#f8e06e"></div>
<div class="t" style="left:662px;top:319.6px;font-size:8.4px;color:#111;font-weight:bold;letter-spacing:-0.3px">Cell</div>
<div class="t" style="left:724.5px;top:309px;font-size:8.4px;color:#222;letter-spacing:-0.32px">a=8.4403(9) &#197; c=7.666(1) &#197;</div>
<div class="t" style="left:724.5px;top:319px;font-size:8.4px;color:#222;letter-spacing:-0.32px">c/a=0.9083</div>
<div class="t" style="left:724.5px;top:329.8px;font-size:8.4px;color:#222;letter-spacing:-0.32px">V=546.12(14) &#197;<sup style="font-size:5px;vertical-align:4px">3</sup></div>
<div class="a" style="left:660px;top:351.8px;width:198.60000000000002px;height:10px;background:#f8e06e"></div>
<div class="t" style="left:660px;top:352.7px;font-size:8.4px;color:#111;width:198.60000000000002px;text-align:center;font-weight:bold;letter-spacing:-0.3px">Atomic parameters</div>
<div class="a" style="left:660px;top:365px;width:23.5px;height:9.5px;background:#f8e06e"></div>
<div class="t" style="left:660px;top:365.9px;font-size:8.4px;color:#111;width:23.5px;text-align:center;font-weight:bold;letter-spacing:-0.45px">Atom</div>
<div class="a" style="left:684.5px;top:365px;width:16.0px;height:9.5px;background:#f8e06e"></div>
<div class="t" style="left:684.5px;top:365.9px;font-size:8.4px;color:#111;width:16.0px;text-align:center;font-weight:bold;letter-spacing:-0.45px">Ox.</div>
<div class="a" style="left:701.5px;top:365px;width:22.5px;height:9.5px;background:#f8e06e"></div>
<div class="t" style="left:701.5px;top:365.9px;font-size:8.4px;color:#111;width:22.5px;text-align:center;font-weight:bold;letter-spacing:-0.45px">Wyck.</div>
<div class="a" style="left:725px;top:365px;width:17px;height:9.5px;background:#f8e06e"></div>
<div class="t" style="left:725px;top:365.9px;font-size:8.4px;color:#111;width:17px;text-align:center;font-weight:bold;letter-spacing:-0.45px">Site</div>
<div class="a" style="left:743.5px;top:365px;width:37.5px;height:9.5px;background:#f8e06e"></div>
<div class="t" style="left:743.5px;top:365.9px;font-size:8.4px;color:#111;width:37.5px;text-align:center;font-weight:bold;letter-spacing:-0.45px">x/a</div>
<div class="a" style="left:782px;top:365px;width:37.5px;height:9.5px;background:#f8e06e"></div>
<div class="t" style="left:782px;top:365.9px;font-size:8.4px;color:#111;width:37.5px;text-align:center;font-weight:bold;letter-spacing:-0.45px">y/b</div>
<div class="a" style="left:820.5px;top:365px;width:38.10000000000002px;height:9.5px;background:#f8e06e"></div>
<div class="t" style="left:820.5px;top:365.9px;font-size:8.4px;color:#111;width:38.10000000000002px;text-align:center;font-weight:bold;letter-spacing:-0.45px">z/c</div>
<div class="t" style="left:664.5px;top:376.9px;font-size:7.9px;color:#222;letter-spacing:-0.35px">V</div>
<div class="t" style="left:688.8px;top:376.9px;font-size:7.9px;color:#222;letter-spacing:-0.35px">0</div>
<div class="t" style="left:703px;top:376.9px;font-size:7.9px;color:#222;letter-spacing:-0.35px">16g</div>
<div class="t" style="left:729.4px;top:376.9px;font-size:7.9px;color:#222;letter-spacing:-0.35px">1</div>
<div class="t" style="left:746px;top:376.9px;font-size:7.9px;color:#222;letter-spacing:-0.35px">0.44818(5)</div>
<div class="t" style="left:784.8px;top:376.9px;font-size:7.9px;color:#222;letter-spacing:-0.35px">0.72455(5)</div>
<div class="t" style="left:824px;top:376.9px;font-size:7.9px;color:#222;letter-spacing:-0.35px">0.12939(5)</div>
<div class="t" style="left:664.5px;top:387.29999999999995px;font-size:7.9px;color:#222;letter-spacing:-0.35px">O1</div>
<div class="t" style="left:688.8px;top:387.29999999999995px;font-size:7.9px;color:#222;letter-spacing:-0.35px">0</div>
<div class="t" style="left:703px;top:387.29999999999995px;font-size:7.9px;color:#222;letter-spacing:-0.35px">16g</div>
<div class="t" style="left:729.4px;top:387.29999999999995px;font-size:7.9px;color:#222;letter-spacing:-0.35px">1</div>
<div class="t" style="left:746px;top:387.29999999999995px;font-size:7.9px;color:#222;letter-spacing:-0.35px">0.4039(2)</div>
<div class="t" style="left:784.8px;top:387.29999999999995px;font-size:7.9px;color:#222;letter-spacing:-0.35px">0.7481(2)</div>
<div class="t" style="left:824px;top:387.29999999999995px;font-size:7.9px;color:#222;letter-spacing:-0.35px">0.3776(6)</div>
<div class="t" style="left:664.5px;top:397.7px;font-size:7.9px;color:#222;letter-spacing:-0.35px">O2</div>
<div class="t" style="left:688.8px;top:397.7px;font-size:7.9px;color:#222;letter-spacing:-0.35px">0</div>
<div class="t" style="left:703px;top:397.7px;font-size:7.9px;color:#222;letter-spacing:-0.35px">16g</div>
<div class="t" style="left:729.4px;top:397.7px;font-size:7.9px;color:#222;letter-spacing:-0.35px">1</div>
<div class="t" style="left:746px;top:397.7px;font-size:7.9px;color:#222;letter-spacing:-0.35px">0.4099(2)</div>
<div class="t" style="left:784.8px;top:397.7px;font-size:7.9px;color:#222;letter-spacing:-0.35px">0.4108(2)</div>
<div class="t" style="left:824px;top:397.7px;font-size:7.9px;color:#222;letter-spacing:-0.35px">0.3732(7)</div>
<div class="a" style="left:5px;top:463px;width:939px;height:17px;background:#9eacc4"></div>
<div class="a" style="left:5px;top:464px;width:455px;height:15.5px;background:linear-gradient(#cfd7e3,#c2ccdb)"></div>
<div class="a" style="left:452px;top:464px;width:8px;height:15.5px;background:linear-gradient(#dde3ec,#cdd5e1)"></div>
<svg style="left:453px;top:473px" width="6" height="6" viewBox="0 0 6 6"><rect x="1" y="0" width="4" height="1" fill="#222"/><path d="M1 2L5 2L3 5Z" fill="#222"/></svg>
<div class="a" style="left:461px;top:464px;width:156px;height:15.5px;background:linear-gradient(#cfd7e3,#c2ccdb)"></div>
<div class="a" style="left:609px;top:464px;width:8px;height:15.5px;background:linear-gradient(#dde3ec,#cdd5e1)"></div>
<svg style="left:610px;top:473px" width="6" height="6" viewBox="0 0 6 6"><rect x="1" y="0" width="4" height="1" fill="#222"/><path d="M1 2L5 2L3 5Z" fill="#222"/></svg>
<div class="a" style="left:618px;top:464px;width:72px;height:15.5px;background:linear-gradient(#cfd7e3,#c2ccdb)"></div>
<div class="a" style="left:682px;top:464px;width:8px;height:15.5px;background:linear-gradient(#dde3ec,#cdd5e1)"></div>
<svg style="left:683px;top:473px" width="6" height="6" viewBox="0 0 6 6"><rect x="1" y="0" width="4" height="1" fill="#222"/><path d="M1 2L5 2L3 5Z" fill="#222"/></svg>
<div class="a" style="left:9px;top:466px;width:2px;height:2px;background:#6d7c92"></div>
<div class="a" style="left:9px;top:469px;width:2px;height:2px;background:#6d7c92"></div>
<div class="a" style="left:9px;top:472px;width:2px;height:2px;background:#6d7c92"></div>
<div class="a" style="left:9px;top:475px;width:2px;height:2px;background:#6d7c92"></div>
<div class="a" style="left:462.5px;top:466px;width:2px;height:2px;background:#6d7c92"></div>
<div class="a" style="left:462.5px;top:469px;width:2px;height:2px;background:#6d7c92"></div>
<div class="a" style="left:462.5px;top:472px;width:2px;height:2px;background:#6d7c92"></div>
<div class="a" style="left:462.5px;top:475px;width:2px;height:2px;background:#6d7c92"></div>
<div class="a" style="left:620.5px;top:466px;width:2px;height:2px;background:#6d7c92"></div>
<div class="a" style="left:620.5px;top:469px;width:2px;height:2px;background:#6d7c92"></div>
<div class="a" style="left:620.5px;top:472px;width:2px;height:2px;background:#6d7c92"></div>
<div class="a" style="left:620.5px;top:475px;width:2px;height:2px;background:#6d7c92"></div>
<div class="a" style="left:465px;top:464.5px;width:13px;height:14.5px;background:linear-gradient(#fff4cc,#fbdc8a);border:1px solid #e3b860"></div>
<svg style="left:465.9px;top:466.5px" width="11" height="11" viewBox="0 0 12 12"><path d="M3 1L3 10L5 8L7 11L8.5 10L6.5 7L9.5 7Z" fill="#fff" stroke="#222" stroke-width="0.9"/></svg>
<svg style="left:12.7px;top:466.5px" width="11" height="11" viewBox="0 0 12 12"><rect x="1" y="1.5" width="10" height="9.5" fill="#f4f4f0" stroke="#8a96a8" stroke-width="0.8"/><rect x="1" y="1.5" width="10" height="1.8" fill="#9aaac0"/><circle cx="6" cy="7" r="2.8" fill="#f0d040" stroke="#c0a020" stroke-width="0.6"/><circle cx="6" cy="7" r="1.2" fill="#fff8d0"/></svg>
<svg style="left:26.9px;top:466.5px" width="11" height="11" viewBox="0 0 12 12"><rect x="0.5" y="1" width="9" height="8" fill="#f0f0f0" stroke="#404a60" stroke-width="0.9"/><rect x="0.5" y="1" width="9" height="2" fill="#3a4a80"/><path d="M5 8.5H10" stroke="#20a8c8" stroke-width="2"/><path d="M9 5.5L12 8.5L9 11.5Z" fill="#20a8c8"/></svg>
<svg style="left:41.3px;top:466.5px" width="11" height="11" viewBox="0 0 12 12"><path d="M5 4L11 11" stroke="#101840" stroke-width="1.8"/><circle cx="3" cy="3" r="1.5" fill="#f0e020"/><circle cx="2.5" cy="7" r="1.5" fill="#f0e020"/><circle cx="6" cy="8.5" r="1.5" fill="#f0e020"/><circle cx="6.5" cy="1.8" r="1.2" fill="#f0e020"/><path d="M1 5H5M3 9.5H7" stroke="#404000" stroke-width="0.6"/></svg>
<svg style="left:55.2px;top:466.5px" width="11" height="11" viewBox="0 0 12 12"><rect x="1.5" y="1" width="10" height="8.5" fill="#f8f8f0" stroke="#303a50" stroke-width="0.9"/><rect x="1.5" y="1" width="10" height="1.6" fill="#3a4a80"/><circle cx="7" cy="5.5" r="2" fill="#f0d040"/><path d="M1 11.5L6 6.5" stroke="#a02020" stroke-width="1.1"/></svg>
<svg style="left:69.6px;top:472.0px" width="4" height="3" viewBox="0 0 4 3"><path d="M0 0H4L2 2.5Z" fill="#222"/></svg>
<div class="a" style="left:77.1px;top:466px;width:1px;height:12px;background:#98a5b8;box-shadow:1px 0 0 #e4e9f0"></div>
<svg style="left:81.8px;top:466.5px" width="11" height="11" viewBox="0 0 12 12"><path d="M2 6L6 2L11 7L7 11Z" fill="#f0e8a0" stroke="#222" stroke-width="1"/><path d="M2 6L7 11" stroke="#222" stroke-width="1.2"/></svg>
<svg style="left:95.7px;top:466.5px" width="11" height="11" viewBox="0 0 12 12"><circle cx="4" cy="4.5" r="2.6" fill="#f0e020" stroke="#222" stroke-width="0.8"/><circle cx="9" cy="4.5" r="2.6" fill="#f0e020" stroke="#222" stroke-width="0.8"/><circle cx="4" cy="9.3" r="2.6" fill="#f0e020" stroke="#222" stroke-width="0.8"/><circle cx="9" cy="9.3" r="2.6" fill="#f0e020" stroke="#222" stroke-width="0.8"/><path d="M0 1.8H3.4M1.7 0.1V3.5" stroke="#222" stroke-width="1"/></svg>
<svg style="left:110.1px;top:466.5px" width="11" height="11" viewBox="0 0 12 12"><path d="M0.5 6H4.5M2.5 4V8" stroke="#222" stroke-width="1.2"/><path d="M4 6H6" stroke="#222" stroke-width="1"/><circle cx="8.5" cy="6" r="3" fill="#f0e020" stroke="#222" stroke-width="0.8"/></svg>
<svg style="left:124.0px;top:466.5px" width="11" height="11" viewBox="0 0 12 12"><circle cx="3" cy="9" r="2" fill="none" stroke="#222" stroke-width="0.9"/><circle cx="9" cy="9" r="2" fill="none" stroke="#222" stroke-width="0.9"/><path d="M4 2Q8 1 7 4Q6 6 4 7" stroke="#222" stroke-width="1" fill="none"/></svg>
<svg style="left:138.7px;top:466.5px" width="11" height="11" viewBox="0 0 12 12"><path d="M2 2L10 10M10 2L2 10" stroke="#2848c0" stroke-width="1"/><rect x="2" y="2" width="8" height="8" fill="none" stroke="#2848c0" stroke-width="1"/><circle cx="2" cy="2" r="1.3" fill="#fff" stroke="#2848c0" stroke-width="0.7"/><circle cx="10" cy="2" r="1.3" fill="#fff" stroke="#2848c0" stroke-width="0.7"/><circle cx="2" cy="10" r="1.3" fill="#fff" stroke="#2848c0" stroke-width="0.7"/><circle cx="10" cy="10" r="1.3" fill="#fff" stroke="#2848c0" stroke-width="0.7"/></svg>
<svg style="left:153.1px;top:466.5px" width="11" height="11" viewBox="0 0 12 12"><circle cx="3" cy="9" r="2" fill="none" stroke="#8a8a8a" stroke-width="0.9"/><circle cx="9" cy="9" r="2" fill="none" stroke="#8a8a8a" stroke-width="0.9"/><path d="M4.5 2H7.5M6 2V6M3.5 7L6 5L8.5 7" stroke="#8a8a8a" stroke-width="0.9" fill="none"/></svg>
<svg style="left:167.2px;top:466.5px" width="11" height="11" viewBox="0 0 12 12"><circle cx="6" cy="6" r="5" fill="#fff" stroke="#8a8a8a" stroke-width="0.8"/><circle cx="6" cy="6" r="3.2" fill="#8a7a20"/></svg>
<svg style="left:180.6px;top:472.0px" width="4" height="3" viewBox="0 0 4 3"><path d="M0 0H4L2 2.5Z" fill="#222"/></svg>
<div class="a" style="left:188.4px;top:466px;width:1px;height:12px;background:#98a5b8;box-shadow:1px 0 0 #e4e9f0"></div>
<svg style="left:192.5px;top:466.5px" width="11" height="11" viewBox="0 0 12 12"><path d="M3 1.5L9 1.5L11.5 6L9 10.5L3 10.5L0.5 6Z" fill="none" stroke="#2040d0" stroke-width="1.4"/></svg>
<svg style="left:206.5px;top:466.5px" width="11" height="11" viewBox="0 0 12 12"><circle cx="6" cy="6" r="4.5" fill="none" stroke="#f0d020" stroke-width="1.8"/><path d="M6 1.5A4.5 4.5 0 0 0 1.5 6" stroke="#2040d0" stroke-width="1.6" fill="none"/></svg>
<svg style="left:220.3px;top:466.5px" width="11" height="11" viewBox="0 0 12 12"><ellipse cx="6" cy="4" rx="4.5" ry="2.5" fill="#c8d8f0" stroke="#2040a0" stroke-width="0.9"/><ellipse cx="6" cy="8" rx="4.5" ry="2.5" fill="#c8d8f0" stroke="#2040a0" stroke-width="0.9"/></svg>
<svg style="left:235.9px;top:466.5px" width="11" height="11" viewBox="0 0 12 12"><path d="M1 1L11 11M11 1L1 11M1 6L6 1L11 6L6 11Z" stroke="#102080" stroke-width="1.1" fill="none"/><circle cx="6" cy="6" r="1.5" fill="#102080"/></svg>
<svg style="left:249.8px;top:466.5px" width="11" height="11" viewBox="0 0 12 12"><path d="M1 1L11 11M11 1L1 11M1 6L6 1L11 6L6 11Z" stroke="#202020" stroke-width="1.1" fill="none"/><circle cx="3" cy="3" r="1.4" fill="#d02020"/><circle cx="9" cy="9" r="1.4" fill="#d02020"/></svg>
<div class="a" style="left:264.1px;top:466px;width:1px;height:12px;background:#98a5b8;box-shadow:1px 0 0 #e4e9f0"></div>
<svg style="left:267.5px;top:466.5px" width="11" height="11" viewBox="0 0 12 12"><circle cx="8.5" cy="3.5" r="2.3" fill="#f0e020" stroke="#222" stroke-width="0.8"/><path d="M7 5L2 10" stroke="#2040c0" stroke-width="1.4"/><circle cx="2.5" cy="9.5" r="1.5" fill="none" stroke="#222" stroke-width="0.8"/></svg>
<svg style="left:282.2px;top:466.5px" width="11" height="11" viewBox="0 0 12 12"><rect x="2" y="2" width="8" height="8" fill="none" stroke="#2040a0" stroke-width="0.9"/><path d="M1 1L3 3M11 1L9 3M1 11L3 9M11 11L9 9" stroke="#2040a0" stroke-width="0.9"/><circle cx="6" cy="1.5" r="1.3" fill="#f0e020"/><circle cx="6" cy="10.5" r="1.3" fill="#f0e020"/></svg>
<svg style="left:296.5px;top:466.5px" width="11" height="11" viewBox="0 0 12 12"><ellipse cx="6" cy="7.5" rx="4.5" ry="3" fill="none" stroke="#222" stroke-width="1"/><path d="M3 4Q6 0 9 4" stroke="#f0d020" stroke-width="1.5" fill="none"/></svg>
<svg style="left:311.2px;top:466.5px" width="11" height="11" viewBox="0 0 12 12"><ellipse cx="6" cy="7.5" rx="4" ry="2.7" fill="none" stroke="#9a9a9a" stroke-width="1"/><ellipse cx="6" cy="4.5" rx="4" ry="2.7" fill="none" stroke="#9a9a9a" stroke-width="1"/></svg>
<div class="a" style="left:325.6px;top:466px;width:1px;height:12px;background:#98a5b8;box-shadow:1px 0 0 #e4e9f0"></div>
<svg style="left:329.0px;top:466.5px" width="11" height="11" viewBox="0 0 12 12"><rect x="1.5" y="1.5" width="9" height="9" fill="#e8eef8" stroke="#2040a0" stroke-width="1.1"/><rect x="3.5" y="3.5" width="5" height="5" fill="none" stroke="#2040a0" stroke-width="0.7"/><path d="M1.5 1.5L3.5 3.5M10.5 10.5L8.5 8.5" stroke="#2040a0" stroke-width="0.7"/></svg>
<svg style="left:343.4px;top:466.5px" width="11" height="11" viewBox="0 0 12 12"><path d="M6 0.5L11.5 6L6 11.5L0.5 6Z" fill="none" stroke="#707070" stroke-width="0.9"/><path d="M6 0.5V11.5M0.5 6H11.5" stroke="#707070" stroke-width="0.7"/></svg>
<svg style="left:357.8px;top:466.5px" width="11" height="11" viewBox="0 0 12 12"><path d="M1 3L11 9M1 9L11 3" stroke="#d02020" stroke-width="2.2"/><path d="M1 6Q6 1 11 6" stroke="#202080" stroke-width="0.9" fill="none"/></svg>
<svg style="left:371.4px;top:472.0px" width="4" height="3" viewBox="0 0 4 3"><path d="M0 0H4L2 2.5Z" fill="#222"/></svg>
<svg style="left:379.3px;top:466.5px" width="11" height="11" viewBox="0 0 12 12"><circle cx="3" cy="9" r="2" fill="none" stroke="#8a8a8a" stroke-width="0.9"/><path d="M4.5 7.5L7 4" stroke="#8a8a8a" stroke-width="0.9"/><text x="6" y="5" font-family="Liberation Sans" font-size="5" fill="#6a6a6a">Fe</text></svg>
<div class="a" style="left:393.9px;top:466px;width:1px;height:12px;background:#98a5b8;box-shadow:1px 0 0 #e4e9f0"></div>
<svg style="left:397.7px;top:466.5px" width="11" height="11" viewBox="0 0 12 12"><rect x="1" y="1" width="10" height="10" fill="#101010"/><path d="M6 1L11 6L6 11L1 6Z" fill="#f0e020"/><circle cx="6" cy="6" r="1.6" fill="#101010"/></svg>
<svg style="left:410.9px;top:472.0px" width="4" height="3" viewBox="0 0 4 3"><path d="M0 0H4L2 2.5Z" fill="#222"/></svg>
<div class="a" style="left:419.2px;top:466px;width:1px;height:12px;background:#98a5b8;box-shadow:1px 0 0 #e4e9f0"></div>
<svg style="left:423.0px;top:466.5px" width="11" height="11" viewBox="0 0 12 12"><text x="0" y="10.5" font-family="Liberation Serif" font-style="italic" font-weight="bold" font-size="11" fill="#1030b0">M</text></svg>
<svg style="left:436.9px;top:466.5px" width="11" height="11" viewBox="0 0 12 12"><rect x="1" y="1" width="10" height="10" fill="#e0e8f0" stroke="#5a6a90" stroke-width="0.8"/><circle cx="6" cy="6" r="3" fill="#30a0a0"/><circle cx="5.5" cy="5.5" r="1.5" fill="#d03030"/></svg>
<svg style="left:479.8px;top:466.5px" width="11" height="11" viewBox="0 0 12 12"><path d="M6 0.5V11.5M0.5 6H11.5" stroke="#222" stroke-width="1"/><path d="M6 0L4 2.5H8ZM6 12L4 9.5H8ZM0 6L2.5 4V8ZM12 6L9.5 4V8Z" fill="#222"/><circle cx="6" cy="6" r="2.8" fill="none" stroke="#222" stroke-width="1.1"/></svg>
<svg style="left:494.5px;top:466.5px" width="11" height="11" viewBox="0 0 12 12"><path d="M9.5 4A4 4 0 1 0 10 7" stroke="#222" stroke-width="1.5" fill="none"/><path d="M8 1L11.5 1.5L10 5Z" fill="#222"/></svg>
<svg style="left:508.9px;top:466.5px" width="11" height="11" viewBox="0 0 12 12"><path d="M6 0.5V11.5M0.5 6H11.5" stroke="#222" stroke-width="1.4"/><path d="M6 0L3.5 3H8.5ZM6 12L3.5 9H8.5ZM0 6L3 3.5V8.5ZM12 6L9 3.5V8.5Z" fill="#222"/></svg>
<svg style="left:522.8px;top:466.5px" width="11" height="11" viewBox="0 0 12 12"><path d="M1 1H4M1 1V4M11 1H8M11 1V4M1 11H4M1 11V8M11 11H8M11 11V8" stroke="#222" stroke-width="1.2" fill="none"/><rect x="3.5" y="3.5" width="5" height="5" fill="none" stroke="#222" stroke-width="1"/></svg>
<svg style="left:536.7px;top:466.5px" width="11" height="11" viewBox="0 0 12 12"><path d="M11 2L1 6L11 10" stroke="#222" stroke-width="1.3" fill="none"/><path d="M6 4Q8 6 6 8" stroke="#222" stroke-width="0.9" fill="none"/></svg>
<svg style="left:551.4px;top:466.5px" width="11" height="11" viewBox="0 0 12 12"><path d="M2 11H10M6 11V5M2 6L6 2L10 6" stroke="#222" stroke-width="1.2" fill="none"/><path d="M3 8H9" stroke="#222" stroke-width="1"/></svg>
<svg style="left:565.8px;top:466.5px" width="11" height="11" viewBox="0 0 12 12"><ellipse cx="6" cy="7" rx="3.5" ry="3" fill="#333"/><circle cx="6" cy="7" r="1.8" fill="#ddd"/><path d="M0.5 4L3 5.5M11.5 4L9 5.5M0.5 9H2.5M11.5 9H9.5M4 2L5 4M8 2L7 4" stroke="#222" stroke-width="0.8"/></svg>
<svg style="left:579.7px;top:466.5px" width="11" height="11" viewBox="0 0 12 12"><rect x="1" y="1" width="6" height="7" fill="#e0e0e0" stroke="#909090" stroke-width="0.8"/><path d="M3 3H5M3 5H5" stroke="#707070" stroke-width="0.8"/><rect x="6" y="6" width="5" height="5" fill="#c8c8c8" stroke="#a0a0a0" stroke-width="0.6"/></svg>
<svg style="left:594.4px;top:466.5px" width="11" height="11" viewBox="0 0 12 12"><rect x="1" y="1" width="6" height="7" fill="#e0e0e0" stroke="#909090" stroke-width="0.8"/><path d="M3 3H5M3 5H5" stroke="#707070" stroke-width="0.8"/><rect x="6" y="6" width="5" height="5" fill="#707070"/></svg>
<svg style="left:623.5px;top:466.5px" width="11" height="11" viewBox="0 0 12 12"><path d="M1 11H11M1 1V11M3.5 5V11M6 5V11M8.5 5V11M11 5V11" stroke="#222" stroke-width="1" fill="none"/></svg>
<svg style="left:638.4px;top:466.5px" width="11" height="11" viewBox="0 0 12 12"><path d="M6 1L11 11H1Z" fill="none" stroke="#222" stroke-width="1.1"/></svg>
<svg style="left:652.5px;top:466.5px" width="11" height="11" viewBox="0 0 12 12"><path d="M2 4Q2 11 6 11Q9 10 8 6" stroke="#222" stroke-width="1.1" fill="#fff"/><path d="M6 7L11 1" stroke="#222" stroke-width="1.3"/><rect x="3" y="2" width="2" height="3" fill="#222"/></svg>
<svg style="left:666.5px;top:466.5px" width="11" height="11" viewBox="0 0 12 12"><path d="M1 8L6 3L11 5L7 10L3 10Z" fill="#fff" stroke="#222" stroke-width="1"/><path d="M4 5L8 9" stroke="#222" stroke-width="0.8"/></svg>
<div class="a" style="left:5px;top:480px;width:939px;height:13px;background:#283553"></div>
<div class="t" style="left:7px;top:482.5px;font-size:7.9px;color:#fff;letter-spacing:-0.28px;-webkit-text-stroke:0">For Help, press F1</div>
<div class="a" style="left:515.1px;top:481px;width:1px;height:11px;background:#8a96aa"></div>
<div class="a" style="left:533.3px;top:481px;width:1px;height:11px;background:#8a96aa"></div>
<div class="a" style="left:551.5px;top:481px;width:1px;height:11px;background:#8a96aa"></div>
<div class="a" style="left:569.3px;top:481px;width:1px;height:11px;background:#8a96aa"></div>
<div class="a" style="left:681.3px;top:481px;width:1px;height:11px;background:#8a96aa"></div>
<div class="a" style="left:710px;top:481px;width:1px;height:11px;background:#8a96aa"></div>
<div class="a" style="left:756.4px;top:481px;width:1px;height:11px;background:#8a96aa"></div>
<div class="a" style="left:802.4px;top:481px;width:1px;height:11px;background:#8a96aa"></div>
<div class="a" style="left:848.3px;top:481px;width:1px;height:11px;background:#8a96aa"></div>
<div class="a" style="left:890.3px;top:481px;width:1px;height:11px;background:#8a96aa"></div>
<div class="t" style="left:554.5px;top:482.5px;font-size:7.9px;color:#fff;letter-spacing:-0.2px">APC</div>
<div class="a" style="left:571.3px;top:481.5px;width:66.2px;height:10.2px;background:#fdd49a"></div>
<div class="t" style="left:573.5px;top:482.5px;font-size:7.9px;color:#111;letter-spacing:-0.1px">Auto Picture</div>
<div class="t" style="left:641px;top:482.5px;font-size:7.7px;color:#fff;letter-spacing:-0.35px">Y. 0.754144</div>
<div class="t" style="left:713px;top:482.5px;font-size:7.9px;color:#fff;letter-spacing:-0.1px">3 parms</div>
<div class="t" style="left:759.8px;top:482.5px;font-size:7.9px;color:#fff;letter-spacing:-0.1px">48 atoms</div>
<div class="t" style="left:805.8px;top:482.5px;font-size:7.9px;color:#fff;letter-spacing:-0.1px">24 bonds</div>
<div class="t" style="left:852.2px;top:482.5px;font-size:7.9px;color:#fff;letter-spacing:-0.1px">polymeric</div>
<div class="t" style="left:893.7px;top:482.5px;font-size:7.9px;color:#fff;letter-spacing:-0.1px">0 polyh.</div>
<svg style="left:934px;top:483.5px" width="8" height="8" viewBox="0 0 8 8"><g fill="#c8d0dc"><rect x="6" y="0" width="1.4" height="1.4"/><rect x="4" y="2" width="1.4" height="1.4"/><rect x="6" y="2" width="1.4" height="1.4"/><rect x="2" y="4" width="1.4" height="1.4"/><rect x="4" y="4" width="1.4" height="1.4"/><rect x="6" y="4" width="1.4" height="1.4"/><rect x="0" y="6" width="1.4" height="1.4"/><rect x="2" y="6" width="1.4" height="1.4"/><rect x="4" y="6" width="1.4" height="1.4"/><rect x="6" y="6" width="1.4" height="1.4"/></g></svg>
</body></html>
